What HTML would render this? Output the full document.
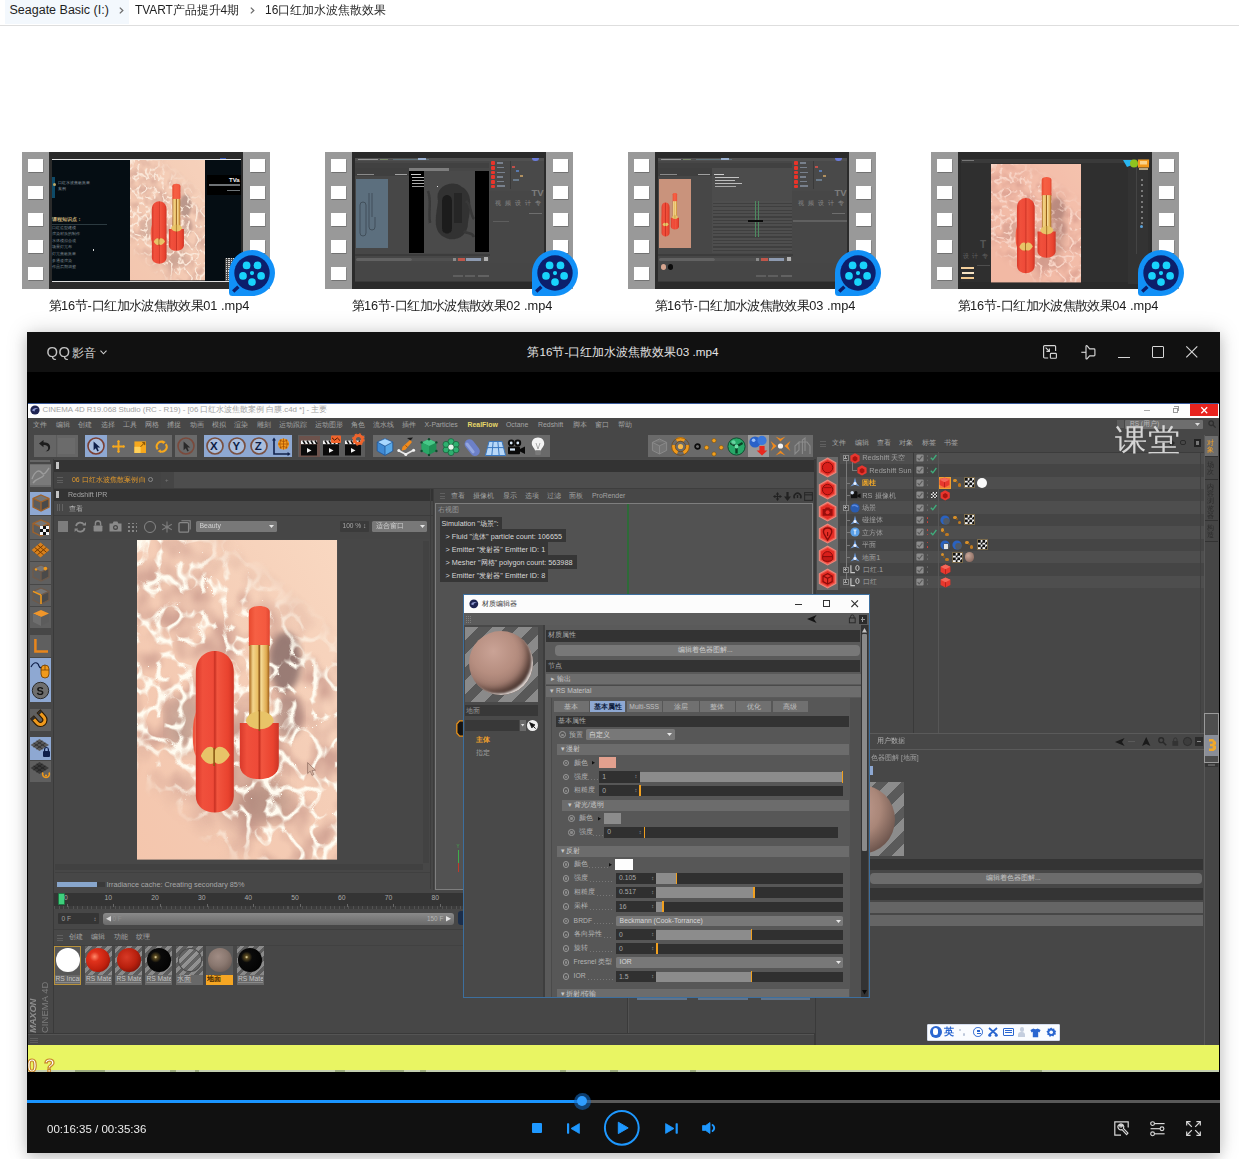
<!DOCTYPE html>
<html lang="zh">
<head>
<meta charset="utf-8">
<title>16口红加水波焦散效果</title>
<style>
*{box-sizing:border-box;margin:0;padding:0}
html,body{width:1239px;height:1159px;overflow:hidden;background:#fff}
body{position:relative;font-family:"Liberation Sans",sans-serif;color:#1b1b1b}
.a{position:absolute}
.t{white-space:nowrap}
svg{position:absolute;overflow:visible}
/* ---------- explorer ---------- */
#crumb{position:absolute;left:0;top:0;width:1239px;height:26px;border-bottom:1px solid #dedede;font-size:12.5px;line-height:20px;white-space:nowrap;color:#1f1f1f}
#crumb .hl{position:absolute;left:5px;top:0;width:124px;height:24px;background:#f3f8fd}
#crumb span{position:absolute;top:-0.5px}
.thumb{position:absolute;top:152px;width:248px;height:137px;background:#2b2b2b}
.thumb .strip{position:absolute;top:0;width:27px;height:137px;background:#999}
.thumb .strip.l{left:0}.thumb .strip.r{right:0}
.thumb .strip i{position:absolute;left:6px;width:15px;height:13px;background:#fff;box-shadow:0.5px 1px 0 #727272}
.thumb .strip.r i{left:7px}
.thumb .pic{position:absolute;left:27px;top:0;width:194px;height:137px;overflow:hidden;background:#2b2b2b}
.flabel{position:absolute;top:297.9px;width:300px;text-align:center;transform:scale(1.032,1.02);font-size:12.4px;line-height:17px;color:#1b1b1b;white-space:nowrap}
/* ---------- player ---------- */
#player{position:absolute;left:27px;top:332px;width:1193px;height:821px;background:#000;box-shadow:0 0 20px rgba(0,0,0,.17),0 5px 12px rgba(0,0,0,.15)}
#ptitle{position:absolute;left:0;top:0;width:1193px;height:40px;background:#111}
#pctrl{position:absolute;left:0;top:771px;width:1193px;height:50px;background:#111}
#video{position:absolute;left:1px;top:71px;width:1191px;height:669px;background:#484848;overflow:hidden}
#pg{position:absolute;left:-28px;top:-403px;width:1239px;height:1159px;font-size:7px;color:#aaa;filter:blur(0.55px)}
</style>
</head>
<body>
<svg width="0" height="0" style="position:absolute;left:0;top:0">
<defs>
<filter id="fcau" x="0" y="0" width="100%" height="100%" color-interpolation-filters="sRGB">
  <feTurbulence type="turbulence" baseFrequency="0.045 0.040" numOctaves="2" seed="23" result="n"/>
  <feColorMatrix in="n" type="matrix" values="0 0 0 0 1  0 0 0 0 0.985  0 0 0 0 0.94  -6.6 0 0 0 1.42"/>
  <feGaussianBlur stdDeviation="0.75"/>
</filter>
<filter id="fcel" x="0" y="0" width="100%" height="100%" color-interpolation-filters="sRGB">
  <feTurbulence type="fractalNoise" baseFrequency="0.040 0.034" numOctaves="2" seed="9" result="n"/>
  <feColorMatrix in="n" type="matrix" values="0 0 0 0 0.82  0 0 0 0 0.64  0 0 0 0 0.58  2.7 0 0 0 -1.08"/>
  <feGaussianBlur stdDeviation="1.2"/>
</filter>
<filter id="b3"><feGaussianBlur stdDeviation="3"/></filter>
<filter id="b6"><feGaussianBlur stdDeviation="7"/></filter>
<filter id="b1"><feGaussianBlur stdDeviation="0.6"/></filter>
<linearGradient id="gpe" x1="1" y1="0" x2="0" y2="1"><stop offset="0" stop-color="#f9d8c1"/><stop offset="0.5" stop-color="#f4ccb5"/><stop offset="1" stop-color="#f4c6ad"/></linearGradient>
<linearGradient id="gm1" gradientUnits="userSpaceOnUse" x1="215" y1="30" x2="-15" y2="290"><stop offset="0" stop-color="#fff" stop-opacity="0"/><stop offset="0.15" stop-color="#fff" stop-opacity="0"/><stop offset="0.30" stop-color="#fff" stop-opacity="1"/><stop offset="0.74" stop-color="#fff" stop-opacity="1"/><stop offset="0.88" stop-color="#fff" stop-opacity="0"/><stop offset="1" stop-color="#fff" stop-opacity="0"/></linearGradient>
<mask id="mk" maskUnits="userSpaceOnUse" x="0" y="0" width="200" height="320"><rect width="200" height="320" fill="#000"/><rect width="200" height="320" fill="url(#gm1)"/></mask>
<linearGradient id="gred" x1="0" x2="1"><stop offset="0" stop-color="#d8392a"/><stop offset="0.18" stop-color="#f0503c"/><stop offset="0.46" stop-color="#ee4a38"/><stop offset="0.5" stop-color="#c83022"/><stop offset="0.56" stop-color="#f2553f"/><stop offset="0.85" stop-color="#e9432f"/><stop offset="1" stop-color="#cc3425"/></linearGradient>
<linearGradient id="gstick" x1="0" x2="1"><stop offset="0" stop-color="#e8492f"/><stop offset="0.3" stop-color="#f66044"/><stop offset="0.8" stop-color="#f4593f"/><stop offset="1" stop-color="#e04630"/></linearGradient>
<linearGradient id="ggold" x1="0" x2="1"><stop offset="0" stop-color="#a8661c"/><stop offset="0.18" stop-color="#f3d58c"/><stop offset="0.42" stop-color="#e9bd62"/><stop offset="0.5" stop-color="#8a5414"/><stop offset="0.58" stop-color="#f6dc98"/><stop offset="0.85" stop-color="#e0ac52"/><stop offset="1" stop-color="#9c5c18"/></linearGradient>
<symbol id="water" viewBox="0 0 200 320" preserveAspectRatio="none">
  <rect width="200" height="320" fill="url(#gpe)"/>
  <g mask="url(#mk)"><rect width="200" height="320" filter="url(#fcel)"/></g>
  <ellipse cx="108" cy="232" rx="38" ry="62" fill="#c09488" opacity=".5" filter="url(#b6)"/>
  <ellipse cx="148" cy="122" rx="16" ry="30" fill="#8a6e6a" opacity=".85" filter="url(#b3)"/>
  <ellipse cx="152" cy="176" rx="14" ry="22" fill="#9c7c76" opacity=".6" filter="url(#b3)"/>
  <ellipse cx="128" cy="262" rx="26" ry="20" fill="#a88478" opacity=".6" filter="url(#b6)"/>
  <ellipse cx="46" cy="186" rx="16" ry="28" fill="#a88e84" opacity=".55" filter="url(#b6)"/>
  <g mask="url(#mk)"><rect width="200" height="320" filter="url(#fcau)"/></g>
</symbol>
<symbol id="lip" viewBox="0 0 100 220">
  <!-- shadow hints -->
  <!-- cap -->
  <path d="M6 72 C6 44 44 44 44 72 V196 C44 218 6 218 6 196 Z" fill="url(#gred)"/>
  <path d="M4 120 C2 135 3 150 6 156 V112 Z" fill="#f0573f"/>
  <path d="M11 156 C15 146 23 144 25 151 C27 144 36 146 40 155 C35 164 28 166 25 162 C22 166 15 164 11 156 Z" fill="#e8c468"/>
  <path d="M24.3 148 V166" stroke="#8c5a14" stroke-width="1.6"/>
  <!-- stick -->
  <path d="M59 12 C59 4 80 4 80 12 V46 H59 Z" fill="url(#gstick)"/>
  <rect x="59.5" y="45" width="20" height="78" fill="url(#ggold)"/>
  <!-- base -->
  <path d="M50 123 H89 V165 C89 184 50 184 50 165 Z" fill="url(#gred)"/>
  <path d="M56 121 C58 108 82 108 84 121 C80 132 60 132 56 121 Z" fill="#e8c468"/>
  <path d="M69.6 110 V131" stroke="#8c5a14" stroke-width="1.5"/>
</symbol>
<symbol id="qq" viewBox="0 0 48 48">
  <path d="M24 1 A23 23 0 1 1 24 47 H4.5 A3.5 3.5 0 0 1 1 43.500 V24 A23 23 0 0 1 24 1 Z" fill="#1190f7"/>
  <circle cx="24" cy="24" r="17.7" fill="#0c1f6c"/>
  <path d="M5.2 42.6 L10.4 37.8" stroke="#0c1f6c" stroke-width="3.4"/>
  <g fill="#18d4fc"><circle cx="18.6" cy="16.4" r="3.85"/><circle cx="29.5" cy="16.4" r="3.85"/><circle cx="15" cy="26.9" r="3.85"/><circle cx="33.1" cy="26.9" r="3.85"/><circle cx="24" cy="33.1" r="3.85"/><circle cx="24" cy="24.1" r="2.1"/></g>
</symbol>
</defs>
</svg>
<!-- ======= Explorer breadcrumb ======= -->
<div id="crumb"><div class="hl"></div><span style="left:9.5px">Seagate Basic (I:)</span><svg style="left:119px;top:7px" width="5" height="7" viewBox="0 0 5 7"><path d="M0.8 0.6 L3.8 3.5 L0.8 6.4" fill="none" stroke="#6e6e6e" stroke-width="1.3"/></svg><span style="left:135px;font-size:12px;transform:scaleX(.991);transform-origin:0 0">TVART产品提升4期</span><svg style="left:250px;top:7px" width="5" height="7" viewBox="0 0 5 7"><path d="M0.8 0.6 L3.8 3.5 L0.8 6.4" fill="none" stroke="#6e6e6e" stroke-width="1.3"/></svg><span style="left:264.8px;font-size:12px;transform:scaleX(.998);transform-origin:0 0">16口红加水波焦散效果</span></div>
<!-- ======= Thumbnails ======= -->
<div class="thumb" id="t1" style="left:22px"><div class="strip l"><i style="top:7px"></i><i style="top:34px"></i><i style="top:61px"></i><i style="top:88px"></i><i style="top:115px"></i></div><div class="pic"><div class="a" style="left:2.5px;top:6.5px;width:189px;height:1.2px;background:#e8e8e8;"></div><div class="a" style="left:2.5px;top:8px;width:189px;height:120.5px;background:#050d13;"></div><div class="a" style="left:2.5px;top:128.5px;width:189px;height:1.6px;background:#e0e0e0;"></div><svg style="left:81px;top:8px" width="75" height="120.5"><use href="#water" width="75" height="120.5"/><rect width="75" height="120.5" fill="#f3c8b2" opacity=".38"/><use href="#lip" x="19.5" y="21.5" width="38.7" height="85.1"/></svg><div class="a" style="left:3px;top:25px;width:3px;height:21px;background:#0e4a68;"></div><div class="a" style="left:3.5px;top:30.5px;width:3px;height:3px;background:#b9a86a;border-radius:50%"></div><span class="a t" style="left:9px;top:28.7px;font-size:3.6px;line-height:5.6px;color:#8e98a0;">口红水波焦散效果</span><span class="a t" style="left:9px;top:34.7px;font-size:3.6px;line-height:5.6px;color:#8e98a0;">案例</span><span class="a t" style="left:2.5px;top:64.7px;font-size:4.6px;line-height:6.6px;color:#c9b27a;font-weight:bold">课程知识点：</span><div class="a" style="left:3px;top:72px;width:55px;height:0.5px;background:#2c3a40;"></div><span class="a t" style="left:3px;top:73.75px;font-size:3.5px;line-height:5.5px;color:#7f8a92;">口红造型建模</span><span class="a t" style="left:3px;top:80.3px;font-size:3.5px;line-height:5.5px;color:#7f8a92;">渲染材质的制作</span><span class="a t" style="left:3px;top:86.85px;font-size:3.5px;line-height:5.5px;color:#7f8a92;">水体模拟合成</span><span class="a t" style="left:3px;top:93.4px;font-size:3.5px;line-height:5.5px;color:#7f8a92;">场景灯光布</span><span class="a t" style="left:3px;top:99.95px;font-size:3.5px;line-height:5.5px;color:#7f8a92;">灯光焦散效果</span><span class="a t" style="left:3px;top:106.5px;font-size:3.5px;line-height:5.5px;color:#7f8a92;">多通道渲染</span><span class="a t" style="left:3px;top:113.05px;font-size:3.5px;line-height:5.5px;color:#7f8a92;">作品后期调整</span><div class="a" style="left:43.5px;top:96.5px;width:1.2px;height:2px;background:#d8d8d8;"></div><div class="a" style="left:158px;top:23px;width:34px;height:20px;background:#000;"></div><span class="a t" style="left:180px;top:23.5px;font-size:6px;line-height:8px;color:#f2f2f2;font-weight:bold">TVa</span><div class="a" style="left:160px;top:32.2px;width:31px;height:2.2px;background:#8a8f92;opacity:.8"></div><div class="a" style="left:178px;top:38px;width:13px;height:1px;background:#70767a;"></div><div class="a" style="left:176px;top:105.5px;width:14px;height:23px;background:#d9d9d9;background-image:repeating-linear-gradient(90deg,#444 0 1px,transparent 1px 2.3px),repeating-linear-gradient(0deg,#555 0 1px,transparent 1px 2.1px)"></div><div class="a" style="left:171px;top:6px;width:6px;height:1.4px;background:#3a62d8;opacity:.8"></div></div><div class="strip r"><i style="top:7px"></i><i style="top:34px"></i><i style="top:61px"></i><i style="top:88px"></i><i style="top:115px"></i></div></div>
<div class="thumb" id="t2" style="left:325px"><div class="strip l"><i style="top:7px"></i><i style="top:34px"></i><i style="top:61px"></i><i style="top:88px"></i><i style="top:115px"></i></div><div class="pic"><div class="a" style="left:2.5px;top:6px;width:189px;height:2.6px;background:#505050;"></div><div class="a" style="left:6px;top:6.5px;width:20px;height:1.3px;background:#9a9a9a;"></div><div class="a" style="left:41px;top:6.5px;width:36px;height:1.2px;background:#5f7078;"></div><div class="a" style="left:66px;top:6.2px;width:8px;height:1.6px;background:#9ab0d0;"></div><div class="a" style="left:28px;top:6.6px;width:8px;height:1px;background:#7a8a6a;"></div><div class="a" style="left:2.5px;top:8.6px;width:189px;height:120.4px;background:#474747;"></div><div class="a" style="left:2.5px;top:10.5px;width:189px;height:5px;background:#414141;"></div><div class="a" style="left:2.5px;top:15.5px;width:54px;height:8px;background:#3f3f3f;"></div><div class="a" style="left:5px;top:21.8px;width:17px;height:1.5px;background:#8a8a8a;"></div><div class="a" style="left:43px;top:21.6px;width:12px;height:1.8px;background:#a0a0a0;"></div><div class="a" style="left:137px;top:8.6px;width:54.5px;height:30px;background:#494949;"></div><div class="a" style="left:139.2px;top:9.4px;width:4px;height:3.6px;background:#e8342a;border-radius:1px"></div><div class="a" style="left:145px;top:10.2px;width:6px;height:1.5px;background:#78808c;"></div><div class="a" style="left:139.2px;top:14.05px;width:4px;height:3.6px;background:#e8342a;border-radius:1px"></div><div class="a" style="left:145px;top:14.85px;width:7px;height:1.5px;background:#78808c;"></div><div class="a" style="left:139.2px;top:18.700000000000003px;width:4px;height:3.6px;background:#e8342a;border-radius:1px"></div><div class="a" style="left:145px;top:19.5px;width:8px;height:1.5px;background:#78808c;"></div><div class="a" style="left:139.2px;top:23.35px;width:4px;height:3.6px;background:#e8342a;border-radius:1px"></div><div class="a" style="left:145px;top:24.15px;width:6px;height:1.5px;background:#78808c;"></div><div class="a" style="left:139.2px;top:28.0px;width:4px;height:3.6px;background:#e8342a;border-radius:1px"></div><div class="a" style="left:145px;top:28.8px;width:7px;height:1.5px;background:#78808c;"></div><div class="a" style="left:139.2px;top:32.65px;width:4px;height:3.6px;background:#e8342a;border-radius:1px"></div><div class="a" style="left:145px;top:33.45px;width:8px;height:1.5px;background:#78808c;"></div><div class="a" style="left:158px;top:9px;width:0.5px;height:28px;background:#3a3a3a;"></div><div class="a" style="left:160px;top:14px;width:3px;height:2px;background:#c0504a;"></div><div class="a" style="left:164px;top:18px;width:3px;height:2px;background:#5a7ab0;"></div><div class="a" style="left:168px;top:22.5px;width:3px;height:2.2px;background:#b09060;"></div><div class="a" style="left:161px;top:27px;width:6px;height:1.6px;background:#6a7a8a;"></div><div class="a" style="left:180px;top:6.4px;width:7px;height:2.4px;background:#6a7ad8;border-radius:0 0 3px 3px"></div><div class="a" style="left:2.5px;top:101.5px;width:135px;height:2.6px;background:#3c3c3c;"></div><div class="a" style="left:3.5px;top:106px;width:56px;height:3.2px;background:#626262;border-radius:1.6px"></div><div class="a" style="left:60px;top:105.8px;width:77px;height:3.4px;background:#505050;"></div><div class="a" style="left:101px;top:105.6px;width:3px;height:3.4px;background:#8a8a8a;"></div><div class="a" style="left:106px;top:106px;width:7px;height:2.8px;background:#c0564a;"></div><div class="a" style="left:114px;top:105.8px;width:15px;height:3px;background:#8d9ab0;"></div><div class="a" style="left:132px;top:105.4px;width:4px;height:3.8px;background:#b0b0b0;"></div><div class="a" style="left:2.5px;top:110.5px;width:189px;height:18.5px;background:#464646;"></div><div class="a" style="left:101px;top:123px;width:10px;height:1.5px;background:#5e5e5e;"></div><div class="a" style="left:113px;top:123px;width:10px;height:1.5px;background:#5e5e5e;"></div><div class="a" style="left:126px;top:123px;width:11px;height:1.6px;background:#626262;"></div><div class="a" style="left:2.5px;top:129px;width:189px;height:1.2px;background:#3a3a3a;"></div><span class="a t" style="left:179.5px;top:34.75px;font-size:9.5px;line-height:11.5px;color:#7d7d7d;font-weight:bold">TV</span><span class="a t" style="left:142.6px;top:48.4px;font-size:5.6px;line-height:7.6px;color:#888;letter-spacing:1.3px">视 频 设 计 专</span><div class="a" style="left:177px;top:61px;width:13px;height:1.4px;background:#6e6e6e;"></div><div class="a" style="left:141px;top:69px;width:16px;height:1.3px;background:#5e5e5e;"></div><div class="a" style="left:3.5px;top:26.5px;width:32px;height:69.5px;background:#5c6f7e;"></div><svg style="left:3.5px;top:26.5px" width="32" height="70" viewBox="0 0 32 70" fill="none" stroke="#414f5a" stroke-width="1"><rect x="4" y="23" width="6" height="34" rx="3"/><path d="M13 14 V48 Q13 51 16 51 Q19 51 19 48 V38 M16 14 V38" /></svg><div class="a" style="left:57px;top:19px;width:14.5px;height:82px;background:#000;"></div><div class="a" style="left:57px;top:16px;width:40px;height:3px;background:#7d7d7d;"></div><div class="a" style="left:59px;top:21.5px;width:10px;height:1.2px;background:#cfcfcf;"></div><div class="a" style="left:60px;top:24.5px;width:22px;height:1.2px;background:#bdbdbd;"></div><div class="a" style="left:60px;top:27.5px;width:19px;height:1.2px;background:#b0b0b0;"></div><div class="a" style="left:60px;top:30.5px;width:24px;height:1.2px;background:#b0b0b0;"></div><div class="a" style="left:60px;top:33.5px;width:18px;height:1.2px;background:#9a9a9a;"></div><div class="a" style="left:71.5px;top:19px;width:51.5px;height:82px;background:#4a4a4a;"></div><svg style="left:71.5px;top:19px" width="52" height="82" viewBox="0 0 52 82"><g filter="url(#b1)"><path d="M14 30 C10 14 30 8 38 16 C50 22 46 40 44 52 C44 66 30 72 20 66 C8 60 12 44 14 30 Z" fill="#333"/><path d="M18 30 C18 22 28 22 28 30 V58 C28 64 18 64 18 58 Z" fill="#1f1f1f"/><path d="M30 22 H38 V52 H30 Z" fill="#262626"/><path d="M4 20 C8 30 4 40 6 52 M40 60 C44 64 48 60 50 66 M42 30 C48 34 46 44 50 48" stroke="#383838" stroke-width="2.5" fill="none"/></g></svg><div class="a" style="left:123px;top:19px;width:14px;height:81px;background:#000;"></div><div class="a" style="left:84.5px;top:33.5px;width:1.4px;height:1.8px;background:#ddd;"></div></div><div class="strip r"><i style="top:7px"></i><i style="top:34px"></i><i style="top:61px"></i><i style="top:88px"></i><i style="top:115px"></i></div></div>
<div class="thumb" id="t3" style="left:628px"><div class="strip l"><i style="top:7px"></i><i style="top:34px"></i><i style="top:61px"></i><i style="top:88px"></i><i style="top:115px"></i></div><div class="pic"><div class="a" style="left:2.5px;top:6px;width:189px;height:2.6px;background:#505050;"></div><div class="a" style="left:6px;top:6.5px;width:20px;height:1.3px;background:#9a9a9a;"></div><div class="a" style="left:41px;top:6.5px;width:36px;height:1.2px;background:#5f7078;"></div><div class="a" style="left:66px;top:6.2px;width:8px;height:1.6px;background:#9ab0d0;"></div><div class="a" style="left:28px;top:6.6px;width:8px;height:1px;background:#7a8a6a;"></div><div class="a" style="left:2.5px;top:8.6px;width:189px;height:120.4px;background:#474747;"></div><div class="a" style="left:2.5px;top:10.5px;width:189px;height:5px;background:#414141;"></div><div class="a" style="left:2.5px;top:15.5px;width:54px;height:8px;background:#3f3f3f;"></div><div class="a" style="left:5px;top:21.8px;width:17px;height:1.5px;background:#8a8a8a;"></div><div class="a" style="left:43px;top:21.6px;width:12px;height:1.8px;background:#a0a0a0;"></div><div class="a" style="left:137px;top:8.6px;width:54.5px;height:30px;background:#494949;"></div><div class="a" style="left:139.2px;top:9.4px;width:4px;height:3.6px;background:#e8342a;border-radius:1px"></div><div class="a" style="left:145px;top:10.2px;width:6px;height:1.5px;background:#78808c;"></div><div class="a" style="left:139.2px;top:14.05px;width:4px;height:3.6px;background:#e8342a;border-radius:1px"></div><div class="a" style="left:145px;top:14.85px;width:7px;height:1.5px;background:#78808c;"></div><div class="a" style="left:139.2px;top:18.700000000000003px;width:4px;height:3.6px;background:#e8342a;border-radius:1px"></div><div class="a" style="left:145px;top:19.5px;width:8px;height:1.5px;background:#78808c;"></div><div class="a" style="left:139.2px;top:23.35px;width:4px;height:3.6px;background:#e8342a;border-radius:1px"></div><div class="a" style="left:145px;top:24.15px;width:6px;height:1.5px;background:#78808c;"></div><div class="a" style="left:139.2px;top:28.0px;width:4px;height:3.6px;background:#e8342a;border-radius:1px"></div><div class="a" style="left:145px;top:28.8px;width:7px;height:1.5px;background:#78808c;"></div><div class="a" style="left:139.2px;top:32.65px;width:4px;height:3.6px;background:#e8342a;border-radius:1px"></div><div class="a" style="left:145px;top:33.45px;width:8px;height:1.5px;background:#78808c;"></div><div class="a" style="left:158px;top:9px;width:0.5px;height:28px;background:#3a3a3a;"></div><div class="a" style="left:160px;top:14px;width:3px;height:2px;background:#c0504a;"></div><div class="a" style="left:164px;top:18px;width:3px;height:2px;background:#5a7ab0;"></div><div class="a" style="left:168px;top:22.5px;width:3px;height:2.2px;background:#b09060;"></div><div class="a" style="left:161px;top:27px;width:6px;height:1.6px;background:#6a7a8a;"></div><div class="a" style="left:180px;top:6.4px;width:7px;height:2.4px;background:#6a7ad8;border-radius:0 0 3px 3px"></div><div class="a" style="left:2.5px;top:101.5px;width:135px;height:2.6px;background:#3c3c3c;"></div><div class="a" style="left:3.5px;top:106px;width:56px;height:3.2px;background:#626262;border-radius:1.6px"></div><div class="a" style="left:60px;top:105.8px;width:77px;height:3.4px;background:#505050;"></div><div class="a" style="left:101px;top:105.6px;width:3px;height:3.4px;background:#8a8a8a;"></div><div class="a" style="left:106px;top:106px;width:7px;height:2.8px;background:#c0564a;"></div><div class="a" style="left:114px;top:105.8px;width:15px;height:3px;background:#8d9ab0;"></div><div class="a" style="left:132px;top:105.4px;width:4px;height:3.8px;background:#b0b0b0;"></div><div class="a" style="left:2.5px;top:110.5px;width:189px;height:18.5px;background:#464646;"></div><div class="a" style="left:101px;top:123px;width:10px;height:1.5px;background:#5e5e5e;"></div><div class="a" style="left:113px;top:123px;width:10px;height:1.5px;background:#5e5e5e;"></div><div class="a" style="left:126px;top:123px;width:11px;height:1.6px;background:#626262;"></div><div class="a" style="left:2.5px;top:129px;width:189px;height:1.2px;background:#3a3a3a;"></div><span class="a t" style="left:179.5px;top:34.75px;font-size:9.5px;line-height:11.5px;color:#7d7d7d;font-weight:bold">TV</span><span class="a t" style="left:142.6px;top:48.4px;font-size:5.6px;line-height:7.6px;color:#888;letter-spacing:1.3px">视 频 设 计 专</span><div class="a" style="left:177px;top:61px;width:13px;height:1.4px;background:#6e6e6e;"></div><div class="a" style="left:141px;top:69px;width:16px;height:1.3px;background:#5e5e5e;"></div><div class="a" style="left:3.5px;top:26.5px;width:32.5px;height:69px;background:#c9937c;"></div><svg style="left:3.5px;top:26.5px" width="33" height="69"><use href="#lip" x="1.3" y="12.8" width="21" height="46.2"/></svg><div class="a" style="left:57px;top:16px;width:80px;height:85px;background:#4c4c4c;"></div><div class="a" style="left:59px;top:21.5px;width:10px;height:1.2px;background:#cfcfcf;"></div><div class="a" style="left:60px;top:24.5px;width:24px;height:1.3px;background:#c4c4c4;"></div><div class="a" style="left:60px;top:27.5px;width:20px;height:1.3px;background:#bcbcbc;"></div><div class="a" style="left:60px;top:30.5px;width:27px;height:1.3px;background:#bcbcbc;"></div><div class="a" style="left:60px;top:33.5px;width:21px;height:1.3px;background:#a8a8a8;"></div><div class="a" style="left:57.5px;top:49px;width:79px;height:50px;background:repeating-linear-gradient(0deg,#3f3f3f 0 1.2px,#4e4e4e 1.2px 3.35px)"></div><div class="a" style="left:100px;top:49px;width:0.8px;height:36px;background:#4d8a60;"></div><div class="a" style="left:103px;top:49px;width:0.8px;height:36px;background:#4d8a60;"></div><div class="a" style="left:92.5px;top:68px;width:15px;height:1.8px;background:#0a0a0a;"></div><div class="a" style="left:5.5px;top:112px;width:5px;height:5.5px;background:#d7a58f;border-radius:50%"></div><div class="a" style="left:12.5px;top:112px;width:5px;height:5.5px;background:#0c0c0c;border-radius:50%"></div><div class="a" style="left:138px;top:68.2px;width:53.5px;height:2px;background:#606060;"></div></div><div class="strip r"><i style="top:7px"></i><i style="top:34px"></i><i style="top:61px"></i><i style="top:88px"></i><i style="top:115px"></i></div></div>
<div class="thumb" id="t4" style="left:931px"><div class="strip l"><i style="top:7px"></i><i style="top:34px"></i><i style="top:61px"></i><i style="top:88px"></i><i style="top:115px"></i></div><div class="pic"><div class="a" style="left:2.5px;top:6.5px;width:189px;height:123px;background:#2f2f2f;"></div><div class="a" style="left:2.5px;top:6.5px;width:189px;height:4.5px;background:#3a3a3a;"></div><div class="a" style="left:4px;top:7.5px;width:12px;height:1.2px;background:#777;"></div><svg style="left:33px;top:11.5px" width="90" height="118.5"><use href="#water" width="90" height="118.5"/><rect width="90" height="118.5" fill="#f0aa98" opacity=".48"/><ellipse cx="66" cy="62" rx="9" ry="30" fill="#b08478" opacity=".45" filter="url(#b3)"/><use href="#lip" x="23.2" y="10.2" width="46.6" height="102.5"/></svg><span class="a t" style="left:22px;top:87.0px;font-size:10px;line-height:12px;color:#565656;font-weight:bold">T</span><span class="a t" style="left:4.5px;top:100.7px;font-size:5.6px;line-height:7.6px;color:#606060;letter-spacing:1px">设 计 专</span><div class="a" style="left:19px;top:113px;width:13px;height:1.2px;background:#4e4e4e;"></div><div class="a" style="left:3px;top:114.6px;width:12.5px;height:2.4px;background:#f3cf9c;"></div><div class="a" style="left:4px;top:119.6px;width:11.5px;height:2.6px;background:#f6e3c4;"></div><div class="a" style="left:3px;top:125px;width:12.5px;height:2.4px;background:#f1c88e;"></div><div class="a" style="left:170px;top:8px;width:20px;height:124px;background:#333;"></div><div class="a" style="left:178px;top:12px;width:1px;height:90px;background:#444;"></div><div class="a" style="left:182.5px;top:27.0px;width:2.4px;height:2px;background:#7a7a7a;"></div><div class="a" style="left:182.5px;top:32.4px;width:2.4px;height:2px;background:#7a7a7a;"></div><div class="a" style="left:182.5px;top:37.8px;width:2.4px;height:2px;background:#7a7a7a;"></div><div class="a" style="left:182.5px;top:43.2px;width:2.4px;height:2px;background:#7a7a7a;"></div><div class="a" style="left:182.5px;top:48.6px;width:2.4px;height:2px;background:#7a7a7a;"></div><div class="a" style="left:182.5px;top:54.0px;width:2.4px;height:2px;background:#7a7a7a;"></div><div class="a" style="left:182.5px;top:59.400000000000006px;width:2.4px;height:2px;background:#7a7a7a;"></div><div class="a" style="left:182.5px;top:64.80000000000001px;width:2.4px;height:2px;background:#7a7a7a;"></div><div class="a" style="left:182.5px;top:70.2px;width:2.4px;height:2px;background:#7a7a7a;"></div><div class="a" style="left:182px;top:73px;width:3px;height:3px;background:#5aa0d8;border-radius:50%"></div><svg style="left:165px;top:6.5px" width="27" height="12" viewBox="0 0 27 12"><path d="M0 1 H9 V6 L4 8 Z" fill="#29b6f0"/><circle cx="11" cy="4.5" r="4" fill="#8fc31f"/><rect x="15" y="0.5" width="11" height="8" fill="#f39a1e"/><rect x="17" y="2" width="7" height="3.5" fill="#fbd28a"/><rect x="16" y="9.3" width="9" height="1.4" fill="#f3d9a8"/></svg></div><div class="strip r"><i style="top:7px"></i><i style="top:34px"></i><i style="top:61px"></i><i style="top:88px"></i><i style="top:115px"></i></div></div>
<div class="flabel" style="left:-1px">第16节-口红加水波焦散效果01 .mp4</div>
<div class="flabel" style="left:302px">第16节-口红加水波焦散效果02 .mp4</div>
<div class="flabel" style="left:605px">第16节-口红加水波焦散效果03 .mp4</div>
<div class="flabel" style="left:908px">第16节-口红加水波焦散效果04 .mp4</div>
<svg style="left:228px;top:249px" width="48" height="48"><use href="#qq" width="48" height="48"/></svg>
<svg style="left:531px;top:249px" width="48" height="48"><use href="#qq" width="48" height="48"/></svg>
<svg style="left:834px;top:249px" width="48" height="48"><use href="#qq" width="48" height="48"/></svg>
<svg style="left:1137px;top:249px" width="48" height="48"><use href="#qq" width="48" height="48"/></svg>
<!-- ======= QQ Player window ======= -->
<div id="player">
<div id="ptitle"><span class="a t" style="left:19.5px;top:10px;font-size:14.8px;line-height:20px;color:#d2d2d2;letter-spacing:0.6px;font-weight:400;opacity:.92">QQ</span><span class="a t" style="left:44.5px;top:10.5px;font-size:12px;line-height:20px;color:#d2d2d2;letter-spacing:0px">影音</span><svg style="left:73px;top:17.5px" width="7" height="5" viewBox="0 0 7 5"><path d="M0.5 0.7 L3.5 3.8 L6.5 0.7" fill="none" stroke="#cfcfcf" stroke-width="1.1"/></svg><span class="a t" style="left:396px;top:10px;width:400px;text-align:center;font-size:11.7px;line-height:20px;color:#e4e4e4">第16节-口红加水波焦散效果03 .mp4</span><svg style="left:1016px;top:13px" width="14" height="14" viewBox="0 0 14 14" fill="none" stroke="#d6d6d6" stroke-width="1.15"><path d="M5.2 13 H1.6 a1 1 0 0 1 -1 -1 V1.6 a1 1 0 0 1 1 -1 H11.6 a1 1 0 0 1 1 1 V6"/><rect x="7.4" y="8.4" width="6" height="4.8" rx="0.8"/><path d="M2.6 2.6 L6.2 6.2 M6.4 3.4 V6.4 H3.4"/></svg><svg style="left:1054px;top:12.5px" width="15" height="15" viewBox="0 0 15 15" fill="none" stroke="#d6d6d6" stroke-width="1.15" stroke-linejoin="round"><path d="M0.3 7.3 H5"/><path d="M5 1.2 C5 0.6 5.8 0.4 6.2 0.9 L8.6 3.8 H13 a0.9 0.9 0 0 1 0.9 0.9 V9.9 a0.9 0.9 0 0 1 -0.9 0.9 H8.6 L6.2 13.7 C5.8 14.2 5 14 5 13.4 Z"/></svg><div class="a" style="left:91px;top:0"></div><div class="a" style="left:1091px;top:24.9px;width:12px;height:1.2px;background:#d6d6d6;"></div><div class="a" style="left:1125.2px;top:14.3px;width:11.6px;height:11.6px;border:1.2px solid #d6d6d6;border-radius:1px"></div><svg style="left:1159px;top:14.3px" width="11.6" height="11.6" viewBox="0 0 11.6 11.6"><path d="M0.3 0.3 L11.3 11.3 M11.3 0.3 L0.3 11.3" stroke="#d6d6d6" stroke-width="1.15" fill="none"/></svg></div>
<div id="video"><div id="pg">
<!-- c4d title / menu / toolbar -->
<div class="a" style="left:28px;top:403px;width:1191px;height:14.6px;background:#fdfdfd;"></div><div class="a" style="left:28px;top:403px;width:1191px;height:0.8px;background:#3a5a9a;"></div><svg style="left:30px;top:405px" width="10" height="10" viewBox="0 0 10 10"><circle cx="5" cy="5" r="4.6" fill="#1e2452"/><path d="M2 5.6 C3 3 6 2.4 8.4 3.6 C6 3.6 4.6 4.8 4.6 6.6 Z" fill="#8f9ad0"/></svg><span class="a t" style="left:42.5px;top:405.45px;font-size:7.9px;line-height:9.9px;color:#a2a2a2;letter-spacing:-0.04px">CINEMA 4D R19.068 Studio (RC - R19) - [06 口红水波焦散案例 白膜.c4d *] - 主要</span><div class="a" style="left:1144px;top:410px;width:6px;height:0.9px;background:#aaa;"></div><div class="a" style="left:1172.5px;top:407.5px;width:5px;height:5px;border:0.8px solid #999"></div><div class="a" style="left:1174px;top:406px;width:5px;height:5px;border-top:0.8px solid #999;border-right:0.8px solid #999"></div><div class="a" style="left:1189.5px;top:403.6px;width:28.5px;height:12px;background:#e8231e;"></div><svg style="left:1200.5px;top:406.5px" width="6.5" height="6.5" viewBox="0 0 6.5 6.5"><path d="M0.3 0.3 L6.2 6.2 M6.2 0.3 L0.3 6.2" stroke="#fff" stroke-width="1.3"/></svg><div class="a" style="left:28px;top:417.6px;width:1191px;height:15px;background:#474747;"></div><span class="a t" style="left:33px;top:420.55px;font-size:6.9px;line-height:8.9px;color:#a4a4a4;">文件</span><span class="a t" style="left:56px;top:420.55px;font-size:6.9px;line-height:8.9px;color:#a4a4a4;">编辑</span><span class="a t" style="left:78px;top:420.55px;font-size:6.9px;line-height:8.9px;color:#a4a4a4;">创建</span><span class="a t" style="left:100.5px;top:420.55px;font-size:6.9px;line-height:8.9px;color:#a4a4a4;">选择</span><span class="a t" style="left:122.5px;top:420.55px;font-size:6.9px;line-height:8.9px;color:#a4a4a4;">工具</span><span class="a t" style="left:145px;top:420.55px;font-size:6.9px;line-height:8.9px;color:#a4a4a4;">网格</span><span class="a t" style="left:167px;top:420.55px;font-size:6.9px;line-height:8.9px;color:#a4a4a4;">捕捉</span><span class="a t" style="left:189.5px;top:420.55px;font-size:6.9px;line-height:8.9px;color:#a4a4a4;">动画</span><span class="a t" style="left:211.5px;top:420.55px;font-size:6.9px;line-height:8.9px;color:#a4a4a4;">模拟</span><span class="a t" style="left:234px;top:420.55px;font-size:6.9px;line-height:8.9px;color:#a4a4a4;">渲染</span><span class="a t" style="left:256.5px;top:420.55px;font-size:6.9px;line-height:8.9px;color:#a4a4a4;">雕刻</span><span class="a t" style="left:278.5px;top:420.55px;font-size:6.9px;line-height:8.9px;color:#a4a4a4;">运动跟踪</span><span class="a t" style="left:314.5px;top:420.55px;font-size:6.9px;line-height:8.9px;color:#a4a4a4;">运动图形</span><span class="a t" style="left:351px;top:420.55px;font-size:6.9px;line-height:8.9px;color:#a4a4a4;">角色</span><span class="a t" style="left:373px;top:420.55px;font-size:6.9px;line-height:8.9px;color:#a4a4a4;">流水线</span><span class="a t" style="left:402px;top:420.55px;font-size:6.9px;line-height:8.9px;color:#a4a4a4;">插件</span><span class="a t" style="left:424.5px;top:420.55px;font-size:6.9px;line-height:8.9px;color:#a4a4a4;">X-Particles</span><span class="a t" style="left:467.5px;top:420.55px;font-size:6.9px;line-height:8.9px;color:#e8d86a;font-weight:bold;">RealFlow</span><span class="a t" style="left:506px;top:420.55px;font-size:6.9px;line-height:8.9px;color:#a4a4a4;">Octane</span><span class="a t" style="left:538px;top:420.55px;font-size:6.9px;line-height:8.9px;color:#a4a4a4;">Redshift</span><span class="a t" style="left:573px;top:420.55px;font-size:6.9px;line-height:8.9px;color:#a4a4a4;">脚本</span><span class="a t" style="left:595px;top:420.55px;font-size:6.9px;line-height:8.9px;color:#a4a4a4;">窗口</span><span class="a t" style="left:617.5px;top:420.55px;font-size:6.9px;line-height:8.9px;color:#a4a4a4;">帮助</span><div class="a" style="left:1117px;top:419.5px;width:7px;height:8px;background:#5c5c5c;"></div><div class="a" style="left:1125px;top:419.8px;width:78px;height:9.4px;background:#6e6e6e;border-radius:1px"></div><span class="a t" style="left:1130px;top:420.25px;font-size:6.5px;line-height:8.5px;color:#b8b8b8;">RS (用户)</span><svg style="left:1195px;top:423px" width="5" height="3" viewBox="0 0 5 3"><path d="M0 0 H5 L2.5 3 Z" fill="#ddd"/></svg><svg style="left:1208px;top:420px" width="8" height="8" viewBox="0 0 8 8" fill="none" stroke="#2e2e2e" stroke-width="1.3"><circle cx="3.2" cy="3.2" r="2.3"/><path d="M5 5 L7.6 7.6"/></svg><div class="a" style="left:28px;top:432.6px;width:1191px;height:26px;background:#474747;"></div><div class="a" style="left:34px;top:435px;width:43.5px;height:21.5px;background:#656565;"></div><div class="a" style="left:55.5px;top:435px;width:0.6px;height:21.5px;background:#5a5a5a;"></div><div class="a" style="left:85px;top:435px;width:21.5px;height:21.5px;background:#8ea8d2;"></div><div class="a" style="left:106.5px;top:435px;width:65.5px;height:21.5px;background:#6a6a6a;"></div><div class="a" style="left:175px;top:435px;width:21.5px;height:21.5px;background:#6a6a6a;"></div><div class="a" style="left:203.5px;top:435px;width:88.5px;height:21.5px;background:#8ea8d2;"></div><div class="a" style="left:298px;top:435px;width:67px;height:21.5px;background:#5c5c5c;"></div><div class="a" style="left:373px;top:435px;width:176.5px;height:21.5px;background:#6a6a6a;"></div><div class="a" style="left:648px;top:435px;width:164.5px;height:21.5px;background:#6a6a6a;"></div><div class="a" style="left:748px;top:435px;width:21px;height:21.5px;background:#9a9a9a;"></div><svg style="left:38px;top:439px" width="14" height="13" viewBox="0 0 14 13"><path d="M1 4.5 L5.5 1 V3.2 C10.5 3.2 12.8 6 12 9.4 C11.4 11.6 9.4 12.4 7.6 12.2 C9.8 11.4 10.6 9.6 10 8 C9.4 6.4 7.6 6 5.5 6 V8.2 Z" fill="#1d1d1d"/></svg><div class="a" style="left:58px;top:438px;width:17px;height:16px;background:#707070;opacity:.6"></div><svg style="left:86px;top:436px" width="20" height="20" viewBox="0 0 20 20"><circle cx="10" cy="10" r="8" fill="#a9bede" stroke="#7b3f32" stroke-width="1.6"/><path d="M7.6 5.4 L7.6 14.2 L9.8 12.2 L11.4 15.4 L12.8 14.7 L11.3 11.6 L14.2 11.4 Z" fill="#10204a"/></svg><svg style="left:111.5px;top:440px" width="13" height="13" viewBox="0 0 17 17"><path d="M8.5 0.5 V16.5 M0.5 8.5 H16.5" stroke="#f7a81c" stroke-width="2.6"/><path d="M8.5 0 L10.6 2.6 H6.4 Z M8.5 17 L10.6 14.4 H6.4 Z M0 8.5 L2.6 6.4 V10.6 Z M17 8.5 L14.4 6.4 V10.6 Z" fill="#f7a81c"/></svg><svg style="left:133.5px;top:440.5px" width="12.4" height="12.4" viewBox="0 0 15 15"><rect x="0.5" y="0.5" width="14" height="14" fill="#f7a81c"/><rect x="0.5" y="7" width="7.5" height="7.5" fill="#ffd15a"/><path d="M8 7 L13 2 M13 2 H10 M13 2 V5" stroke="#7a4a00" stroke-width="1.2" fill="none"/></svg><svg style="left:155px;top:439.5px" width="13.4" height="13.4" viewBox="0 0 17 17"><path d="M3.4 11.8 A6 6 0 0 1 11 2.9" stroke="#f7a81c" stroke-width="2.6" fill="none"/><path d="M13.6 5.2 A6 6 0 0 1 6 14.1" stroke="#f7a81c" stroke-width="2.6" fill="none"/><path d="M9.4 0.4 L13.6 2.6 L10 5.4 Z M7.6 16.6 L3.4 14.4 L7 11.6 Z" fill="#f7a81c"/></svg><svg style="left:176px;top:436px" width="20" height="20" viewBox="0 0 20 20"><circle cx="10" cy="10" r="8" fill="#6a6a6a" stroke="#7b4a3c" stroke-width="1.6"/><path d="M7.6 5.4 L7.6 14.2 L9.8 12.2 L11.4 15.4 L12.8 14.7 L11.3 11.6 L14.2 11.4 Z" fill="#2a2a2a"/></svg><svg style="left:204.5px;top:436px" width="20" height="20" viewBox="0 0 20 20"><circle cx="10" cy="10" r="8" fill="#a9bede" stroke="#7a5040" stroke-width="1.7"/></svg><span class="a t" style="left:210.1px;top:439.55px;font-size:11.5px;line-height:13.5px;color:#0e1c44;font-weight:bold">X</span><svg style="left:226.8px;top:436px" width="20" height="20" viewBox="0 0 20 20"><circle cx="10" cy="10" r="8" fill="#a9bede" stroke="#7a5040" stroke-width="1.7"/></svg><span class="a t" style="left:232.4px;top:439.55px;font-size:11.5px;line-height:13.5px;color:#0e1c44;font-weight:bold">Y</span><svg style="left:249.1px;top:436px" width="20" height="20" viewBox="0 0 20 20"><circle cx="10" cy="10" r="8" fill="#a9bede" stroke="#7a5040" stroke-width="1.7"/></svg><span class="a t" style="left:254.7px;top:439.55px;font-size:11.5px;line-height:13.5px;color:#0e1c44;font-weight:bold">Z</span><svg style="left:271px;top:436.5px" width="20" height="20" viewBox="0 0 20 20"><path d="M3 2 V17 H18" stroke="#10204a" stroke-width="1.6" fill="none"/><path d="M3 0.4 L5 3.4 H1 Z M19.6 17 L16.6 15 V19 Z" fill="#10204a"/><circle cx="12.5" cy="7" r="5.6" fill="#f39a1e"/><path d="M7 7 H18 M12.5 1.4 V12.6 M8.6 3.2 Q12.5 6 16.4 3.2 M8.6 10.8 Q12.5 8 16.4 10.8 M10 2 Q7.5 7 10 12 M15 2 Q17.5 7 15 12" stroke="#a04c00" stroke-width="0.7" fill="none"/></svg><div class="a" style="left:298.5px;top:435.5px;width:21px;height:21px;background:#7a4a40;opacity:.55"></div><svg style="left:300px;top:438px" width="19" height="18" viewBox="0 0 19 18"><path d="M1 6.5 H17 V17.5 H1 Z" fill="#0b0b0b"/><path d="M1 2.6 H17 V6 H1 Z" fill="#f2f2f2"/><path d="M3 2.6 L5 6 M7 2.6 L9 6 M11 2.6 L13 6 M15 2.6 L17 6" stroke="#111" stroke-width="1.6"/><path d="M7 10 L11.5 12.4 L7 14.8 Z" fill="#f2f2f2"/></svg><svg style="left:322px;top:438px" width="19" height="18" viewBox="0 0 19 18"><path d="M1 6.5 H17 V17.5 H1 Z" fill="#0b0b0b"/><path d="M1 2.6 H17 V6 H1 Z" fill="#f2f2f2"/><path d="M3 2.6 L5 6 M7 2.6 L9 6 M11 2.6 L13 6 M15 2.6 L17 6" stroke="#111" stroke-width="1.6"/><path d="M7 10 L11.5 12.4 L7 14.8 Z" fill="#f2f2f2"/><rect x="9" y="-2.4" width="10" height="7.4" rx="1" fill="#f0642c"/><path d="M10 -0.2 L12.6 2.2 L15.4 0 L18 2.6" stroke="#4a1a00" stroke-width="1" fill="none"/></svg><svg style="left:344px;top:438px" width="19" height="18" viewBox="0 0 19 18"><path d="M1 6.5 H17 V17.5 H1 Z" fill="#0b0b0b"/><path d="M1 2.6 H17 V6 H1 Z" fill="#f2f2f2"/><path d="M3 2.6 L5 6 M7 2.6 L9 6 M11 2.6 L13 6 M15 2.6 L17 6" stroke="#111" stroke-width="1.6"/><path d="M7 10 L11.5 12.4 L7 14.8 Z" fill="#f2f2f2"/><circle cx="14.4" cy="1.4" r="4" fill="none" stroke="#f0642c" stroke-width="3"/><circle cx="14.4" cy="1.4" r="5.6" fill="none" stroke="#f0642c" stroke-width="1.4" stroke-dasharray="2 2.4"/></svg><svg style="left:376px;top:437.5px" width="18" height="18" viewBox="0 0 18 18"><path d="M9 0.6 L16.8 4 V13 L9 17.4 L1.2 13 V4 Z" fill="#58a8e8"/><path d="M9 0.6 L16.8 4 L9 8.2 L1.2 4 Z" fill="#a8d8ff"/><path d="M9 8.2 V17.4 L1.2 13 V4 Z" fill="#3f8ad4"/><path d="M9 0.6 L16.8 4 V13 L9 17.4 L1.2 13 V4 Z M1.2 4 L9 8.2 L16.8 4 M9 8.2 V17.4" stroke="#1a4a8a" stroke-width="0.7" fill="none"/></svg><svg style="left:397px;top:436.5px" width="19" height="20" viewBox="0 0 19 20"><path d="M10 1 L16 0.4 L13.6 3.4 Z" fill="#1a1a1a"/><path d="M13 3 L15 5 L8.4 12.8 L4.6 13.6 L5.6 9.8 Z" fill="#f08a1c"/><path d="M8.6 8.4 L10.6 10.4" stroke="#7a3a00" stroke-width="0.8"/><path d="M1.4 13.4 L8.8 17.2 L16.4 13.2" stroke="#e8e8e8" stroke-width="1.7" fill="none"/><circle cx="1.8" cy="13.4" r="1.5" fill="#f2f2f2"/><circle cx="16.6" cy="13.2" r="1.5" fill="#f2f2f2"/><circle cx="8.8" cy="17.4" r="1.5" fill="#f2f2f2"/></svg><svg style="left:419.5px;top:437.5px" width="18" height="18" viewBox="0 0 18 18"><path d="M9 1 L16.4 4.4 V13 L9 17 L1.6 13 V4.4 Z" fill="#1f8f55"/><path d="M9 1 L16.4 4.4 L9 8 L1.6 4.4 Z" fill="#48c888"/><path d="M9 8 V17 L1.6 13 V4.4 Z" fill="#2aa868"/><g fill="#0f4a2c"><circle cx="9" cy="1.2" r="1.2"/><circle cx="16.4" cy="4.4" r="1.2"/><circle cx="1.6" cy="4.4" r="1.2"/><circle cx="16.4" cy="13" r="1.2"/><circle cx="1.6" cy="13" r="1.2"/><circle cx="9" cy="17" r="1.2"/></g></svg><svg style="left:441.5px;top:437.5px" width="18" height="18" viewBox="0 0 18 18"><g fill="#2fb070" stroke="#126038" stroke-width="0.7"><circle cx="9" cy="3.6" r="3"/><circle cx="14" cy="6.4" r="3"/><circle cx="14" cy="11.8" r="3"/><circle cx="9" cy="14.6" r="3"/><circle cx="4" cy="11.8" r="3"/><circle cx="4" cy="6.4" r="3"/></g><circle cx="9" cy="9.1" r="2.6" fill="#e8f8ee"/></svg><svg style="left:463.5px;top:438px" width="18" height="18" viewBox="0 0 18 18"><rect x="3.2" y="-0.4" width="9.6" height="18.8" rx="4.8" transform="rotate(-38 9 9)" fill="#6c80c8"/><rect x="4.6" y="1.4" width="3" height="13" rx="1.5" transform="rotate(-38 9 9)" fill="#93a6e0"/></svg><svg style="left:484.5px;top:441px" width="21" height="15" viewBox="0 0 21 15"><path d="M4 0.5 H17 L20.6 14.5 H0.4 Z" fill="#b8d8f8"/><path d="M4 0.5 H17 L20.6 14.5 H0.4 Z M2.4 6.6 H18.6 M8.2 0.5 L6.8 14.5 M12.8 0.5 L14.2 14.5" stroke="#3a78c0" stroke-width="1" fill="none"/></svg><svg style="left:507px;top:438.5px" width="19" height="16" viewBox="0 0 19 16"><rect x="1" y="7.4" width="12" height="7.8" rx="1" fill="#0a0a0a"/><path d="M13 10 L18 7.6 V15 L13 12.6 Z" fill="#0a0a0a"/><circle cx="4.2" cy="4" r="3.4" fill="#0a0a0a"/><circle cx="10.8" cy="4" r="3.4" fill="#0a0a0a"/><circle cx="4.2" cy="4" r="1.4" fill="#d8e8f8"/><circle cx="10.8" cy="4" r="1.4" fill="#d8e8f8"/><rect x="3" y="9.4" width="5" height="2.2" fill="#d8e8f8"/></svg><svg style="left:531px;top:437px" width="14" height="19" viewBox="0 0 14 19"><path d="M7 0.6 C11 0.6 13.2 3.4 13.2 6.6 C13.2 9.6 10.4 11 10 13.4 H4 C3.6 11 0.8 9.6 0.8 6.6 C0.8 3.4 3 0.6 7 0.6 Z" fill="#f4f4f4"/><path d="M5 6 L7 12 L9 6" stroke="#999" stroke-width="0.8" fill="none"/><rect x="4.2" y="13.6" width="5.6" height="4.4" rx="1" fill="#7a7a7a"/></svg><svg style="left:651px;top:438px" width="17" height="17" viewBox="0 0 17 17"><path d="M8.5 1 L15.6 4.4 V12.4 L8.5 16 L1.4 12.4 V4.4 Z M1.4 4.4 L8.5 7.8 L15.6 4.4 M8.5 7.8 V16" stroke="#8a8a8a" stroke-width="1" fill="#757575"/></svg><svg style="left:671px;top:437px" width="19" height="19" viewBox="0 0 19 19"><g fill="none" stroke="#f09a1c" stroke-width="3.6"><path d="M5.4 3.4 A7 7 0 0 1 13.6 3.4"/><path d="M16.4 8 A7 7 0 0 1 12.4 15.6"/><path d="M6.6 15.6 A7 7 0 0 1 2.6 8"/></g><circle cx="9.5" cy="9.5" r="2.6" fill="#f5b84a"/><g stroke="#6a3a00" stroke-width="0.6" fill="none"><circle cx="9.5" cy="9.5" r="8.8"/><circle cx="9.5" cy="9.5" r="5.2"/></g></svg><svg style="left:693.5px;top:442.5px" width="7" height="7" viewBox="0 0 7 7"><circle cx="3.5" cy="3.5" r="2.4" fill="none" stroke="#0c0c0c" stroke-width="1.7"/></svg><svg style="left:704px;top:437.5px" width="22" height="18" viewBox="0 0 22 18"><g fill="#f2a01e" stroke="#7a4a00" stroke-width="0.5"><circle cx="10" cy="2.6" r="2.1"/><circle cx="2.6" cy="9.6" r="2.1"/><circle cx="17.2" cy="9.6" r="2.1"/><circle cx="10" cy="16" r="2.1"/></g></svg><svg style="left:727px;top:437px" width="19" height="19" viewBox="0 0 19 19"><circle cx="9.5" cy="9.5" r="8.6" fill="#27a868" stroke="#0e5030" stroke-width="1"/><path d="M9.5 9.5 L3.4 6 M9.5 9.5 L15.6 6 M9.5 9.5 V16.6" stroke="#0b4026" stroke-width="2.4"/><circle cx="9.5" cy="9.5" r="2" fill="#6ce0a8"/><circle cx="6.4" cy="5.4" r="2.2" fill="#7fe8b8" opacity=".7"/></svg><svg style="left:748px;top:435px" width="21" height="21" viewBox="0 0 21 21"><circle cx="7" cy="7" r="5.6" fill="#2a62c8"/><circle cx="14" cy="5.4" r="4.6" fill="#3a78dc"/><circle cx="5.6" cy="5.2" r="1.8" fill="#9cc0f8"/><path d="M11.4 11 H16.6 V15.4 H19.4 L14 20.6 L8.6 15.4 H11.4 Z" fill="#e8281e"/></svg><svg style="left:770px;top:436px" width="21" height="20" viewBox="0 0 21 20"><g fill="#f08a1c"><path d="M0.6 5 L6.6 10 L0.6 15 L3 10 Z"/><path d="M20.4 5 L14.4 10 L20.4 15 L18 10 Z"/><path d="M5.6 0.6 L10.5 5.6 L15.4 0.6 L10.5 2.8 Z"/><path d="M5.6 19.4 L10.5 14.4 L15.4 19.4 L10.5 17.2 Z"/></g><circle cx="10.5" cy="10" r="2.6" fill="#f4f4f4"/></svg><svg style="left:793px;top:437px" width="19" height="18" viewBox="0 0 19 18"><g fill="none" stroke="#8c8c8c" stroke-width="1.1"><path d="M2 17 V9 L6 5 V13 Z M6 5 H14 L17 9 V17 M9.4 17 V3 L12 1 V14"/></g></svg><!-- left column + IPR panel -->
<div class="a" style="left:28px;top:458.6px;width:25px;height:590px;background:#474747;"></div><div class="a" style="left:52.6px;top:458.6px;width:0.8px;height:586px;background:#3a3a3a;"></div><div class="a" style="left:30px;top:459.5px;width:20px;height:0.8px;background:#666;"></div><div class="a" style="left:30px;top:461px;width:20px;height:0.8px;background:#666;"></div><div class="a" style="left:29.6px;top:464px;width:21.6px;height:22.5px;background:#6c6c6c;"></div><svg style="left:30px;top:465px" width="21" height="20" viewBox="0 0 21 20"><rect width="21" height="20" fill="#7a7a7a"/><path d="M2 14 C5 6 9 4 12 8 C14 11 17 6 19 3 M3 18 C7 12 12 14 14 10" stroke="#9c9c9c" stroke-width="1.4" fill="none"/></svg><div class="a" style="left:29.6px;top:491.5px;width:21.6px;height:23px;background:#8ea8d2;"></div><svg style="left:30.5px;top:493px" width="20" height="20" viewBox="0 0 20 20"><path d="M10 2 L18 5.4 V14 L10 18 L2 14 V5.4 Z" fill="#4a4a4a"/><path d="M10 2 L18 5.4 L10 9 L2 5.4 Z" fill="#767676"/><path d="M10 9 V18 L2 14 V5.4 Z" fill="#5c5c5c"/><path d="M10 2 L18 5.4 V14 L10 18 L2 14 V5.4 Z M2 5.4 L10 9 L18 5.4 M10 9 V18" stroke="#a0622a" stroke-width="1.3" fill="none"/></svg><div class="a" style="left:29.6px;top:516px;width:21.6px;height:23px;background:#5f5f5f;"></div><svg style="left:30.5px;top:517.5px" width="20" height="20" viewBox="0 0 20 20"><path d="M10 2 L18 5.4 V14 L10 18 L2 14 V5.4 Z" fill="#4a4a4a"/><path d="M10 2 L18 5.4 L10 9 L2 5.4 Z" fill="#767676"/><path d="M10 9 V18 L2 14 V5.4 Z" fill="#5c5c5c"/><path d="M10 2 L18 5.4 V14 L10 18 L2 14 V5.4 Z M2 5.4 L10 9 L18 5.4 M10 9 V18" stroke="#a0622a" stroke-width="1.3" fill="none"/><g fill="#f4f4f4"><rect x="9" y="8" width="3" height="3"/><rect x="15" y="8" width="3" height="3"/><rect x="12" y="11" width="3" height="3"/><rect x="9" y="14" width="3" height="3"/><rect x="15" y="14" width="3" height="3"/></g><g fill="#111"><rect x="12" y="8" width="3" height="3"/><rect x="9" y="11" width="3" height="3"/><rect x="15" y="11" width="3" height="3"/><rect x="12" y="14" width="3" height="3"/></g></svg><div class="a" style="left:29.6px;top:540px;width:21.6px;height:21px;background:#5f5f5f;"></div><svg style="left:31px;top:542px" width="19" height="16" viewBox="0 0 19 16"><path d="M9.5 0.6 L18.4 8 L9.5 15.4 L0.6 8 Z" fill="#d8801c"/><path d="M3.6 5.4 L12.6 12.8 M6.6 3 L15.6 10.4 M15.4 5.4 L6.4 12.8 M12.4 3 L3.4 10.4" stroke="#6a3600" stroke-width="0.9"/></svg><div class="a" style="left:29.6px;top:562px;width:21.6px;height:22px;background:#5f5f5f;"></div><svg style="left:30.5px;top:563px" width="20" height="20" viewBox="0 0 20 20"><path d="M10 2 L18 5.4 V14 L10 18 L2 14 V5.4 Z" fill="#4a4a4a"/><path d="M10 2 L18 5.4 L10 9 L2 5.4 Z" fill="#767676"/><path d="M10 9 V18 L2 14 V5.4 Z" fill="#5c5c5c"/><path d="M10 2 L18 5.4 V14 L10 18 L2 14 V5.4 Z M2 5.4 L10 9 L18 5.4 M10 9 V18" stroke="#6e5a4a" stroke-width="1.3" fill="none"/><circle cx="14.4" cy="5.6" r="1.8" fill="#f09a1c"/><circle cx="5" cy="6.4" r="1.2" fill="#f09a1c"/></svg><div class="a" style="left:29.6px;top:585px;width:21.6px;height:21px;background:#5f5f5f;"></div><svg style="left:30.5px;top:586px" width="20" height="20" viewBox="0 0 20 20"><path d="M10 2 L18 5.4 V14 L10 18 L2 14 V5.4 Z" fill="#4a4a4a"/><path d="M10 2 L18 5.4 L10 9 L2 5.4 Z" fill="#767676"/><path d="M10 9 V18 L2 14 V5.4 Z" fill="#5c5c5c"/><path d="M10 2 L18 5.4 V14 L10 18 L2 14 V5.4 Z M2 5.4 L10 9 L18 5.4 M10 9 V18" stroke="#6e5a4a" stroke-width="1.3" fill="none"/><path d="M10 9 V18 M2 5.4 L10 9" stroke="#f09a1c" stroke-width="1.5"/></svg><div class="a" style="left:29.6px;top:607px;width:21.6px;height:21px;background:#5f5f5f;"></div><svg style="left:30.5px;top:607.5px" width="20" height="20" viewBox="0 0 20 20"><path d="M10 2 L18 5.4 V14 L10 18 L2 14 V5.4 Z" fill="#5c5c5c"/><path d="M10 2 L18 5.4 L10 9 L2 5.4 Z" fill="#f0962a"/><path d="M10 9 V18 L2 14 V5.4 Z" fill="#6e6e6e"/></svg><div class="a" style="left:29.6px;top:635px;width:21.6px;height:22px;background:#5f5f5f;"></div><svg style="left:32px;top:637px" width="18" height="18" viewBox="0 0 18 18"><path d="M3.4 2 V14.6 H16" stroke="#e8861c" stroke-width="2.5" fill="none"/></svg><div class="a" style="left:29.6px;top:657.5px;width:21.6px;height:22px;background:#8ea8d2;"></div><svg style="left:30px;top:658.5px" width="21" height="20" viewBox="0 0 21 20"><path d="M1 8 C4 2 8 3 9 7 C10 10 13 9 15 6" stroke="#10204a" stroke-width="1.2" fill="none"/><rect x="11" y="6" width="8" height="13" rx="4" fill="#f09a1c" stroke="#6a3a00" stroke-width="0.8"/><path d="M15 6 V11 M11 11 H19" stroke="#6a3a00" stroke-width="0.7"/></svg><div class="a" style="left:29.6px;top:680px;width:21.6px;height:22px;background:#8ea8d2;"></div><svg style="left:31px;top:681px" width="19" height="19" viewBox="0 0 19 19"><circle cx="9.5" cy="9.5" r="8.2" fill="#6e6e6e" stroke="#2a2a2a" stroke-width="1"/></svg><span class="a t" style="left:36.4px;top:684.5px;font-size:11px;line-height:13px;color:#141414;font-weight:bold">S</span><div class="a" style="left:29.6px;top:709px;width:21.6px;height:21.5px;background:#5f5f5f;"></div><svg style="left:31px;top:710.5px" width="19" height="18" viewBox="0 0 19 18"><g transform="rotate(-42 9.5 9)"><path d="M3 1.6 H7.2 V9 A2.3 2.3 0 0 0 11.8 9 V1.6 H16 V9 A6.5 6.5 0 0 1 3 9 Z" fill="#f09a1c" stroke="#2a1800" stroke-width="1.1"/><path d="M3 1.6 H7.2 V4.2 H3 Z M11.8 1.6 H16 V4.2 H11.8 Z" fill="#2e2e2e"/></g></svg><div class="a" style="left:29.6px;top:737px;width:21.6px;height:23px;background:#8ea8d2;"></div><svg style="left:30px;top:738px" width="21" height="21" viewBox="0 0 21 21"><path d="M9.5 1 L19 7 L9.5 13 L0.6 7 Z" fill="#5a5a5a"/><path d="M3.6 5 L12.6 11 M6.6 3 L15.6 9 M15.4 5 L6.4 11 M12.4 3 L3.4 9" stroke="#2a2a2a" stroke-width="0.8"/><rect x="13" y="13" width="7" height="6" rx="1" fill="#10204a"/><path d="M14.6 13 V11.4 A1.9 1.9 0 0 1 18.4 11.4 V13" stroke="#10204a" stroke-width="1.2" fill="none"/></svg><div class="a" style="left:29.6px;top:760.5px;width:21.6px;height:21px;background:#5f5f5f;"></div><svg style="left:30px;top:761px" width="21" height="20" viewBox="0 0 21 20"><path d="M9.5 1 L19 7 L9.5 13 L0.6 7 Z" fill="#3a3a3a"/><path d="M3.6 5 L12.6 11 M6.6 3 L15.6 9 M15.4 5 L6.4 11 M12.4 3 L3.4 9" stroke="#222" stroke-width="0.8"/><path d="M13 11.5 A3.4 3.4 0 1 0 19 11.5" stroke="#f09a1c" stroke-width="1.6" fill="none"/><circle cx="16" cy="14.6" r="1.1" fill="#f09a1c"/></svg><span class="a t" style="left:27.5px;top:1032.5px;font-size:9.6px;line-height:10px;color:#8e8e8e;font-weight:bold;font-style:italic;transform-origin:0 0;transform:rotate(-90deg);letter-spacing:-0.3px">MAXON</span><span class="a t" style="left:39.5px;top:1032.5px;font-size:9.4px;line-height:10px;color:#7c7c7c;transform-origin:0 0;transform:rotate(-90deg);letter-spacing:0.1px">CINEMA 4D</span><div class="a" style="left:53.5px;top:459.8px;width:760px;height:12.4px;background:#333;"></div><div class="a" style="left:55.5px;top:462px;width:3.6px;height:7px;background:#c4c4c4;"></div><div class="a" style="left:53.5px;top:472.2px;width:760px;height:15.6px;background:#4d4d4d;"></div><div class="a" style="left:53.5px;top:472.2px;width:107px;height:15.6px;background:#434343;"></div><div class="a" style="left:57px;top:476px;width:6px;height:7px;background:repeating-linear-gradient(0deg,#5e5e5e 0 1px,transparent 1px 2.4px)"></div><span class="a t" style="left:72px;top:475.55px;font-size:6.9px;line-height:8.9px;color:#e39a2c;">06 口红水波焦散案例 白</span><div class="a" style="left:147.5px;top:476.5px;width:5.6px;height:5.6px;border:0.9px solid #8a8a8a;border-radius:50%"></div><div class="a" style="left:160.5px;top:472.2px;width:13px;height:15.6px;background:#454545;"></div><span class="a t" style="left:165px;top:476.0px;font-size:6px;line-height:8px;color:#777;">+</span><div class="a" style="left:53.5px;top:487.8px;width:760px;height:1.4px;background:#3e3e3e;"></div><div class="a" style="left:53.5px;top:489.2px;width:379px;height:11.4px;background:#333;"></div><div class="a" style="left:55.5px;top:491px;width:3.6px;height:7px;background:#c4c4c4;"></div><span class="a t" style="left:68px;top:489.9px;font-size:7px;line-height:9px;color:#a4a4a4;">Redshift IPR</span><div class="a" style="left:53.5px;top:500.6px;width:379px;height:14px;background:#474747;"></div><div class="a" style="left:57px;top:504px;width:6px;height:7px;background:repeating-linear-gradient(90deg,#646464 0 1px,transparent 1px 2.4px)"></div><span class="a t" style="left:69px;top:505.15px;font-size:6.9px;line-height:8.9px;color:#b0b0b0;">查看</span><div class="a" style="left:53.5px;top:514.6px;width:379px;height:1px;background:#3c3c3c;"></div><div class="a" style="left:53.5px;top:515.6px;width:379px;height:23.4px;background:#464646;"></div><div class="a" style="left:58px;top:521px;width:10px;height:10.5px;background:#7d7d7d;"></div><svg style="left:73.5px;top:520.5px" width="12.5" height="12" viewBox="0 0 12.5 12"><path d="M2 5 A4.4 4.4 0 0 1 10 3.6 M10.6 7 A4.4 4.4 0 0 1 2.4 8.4" stroke="#8a8a8a" stroke-width="1.7" fill="none"/><path d="M8.4 4.6 H12 V1 Z M4.2 7.4 H0.6 V11 Z" fill="#8a8a8a"/></svg><svg style="left:93px;top:520px" width="10" height="12" viewBox="0 0 10 12"><rect x="0.6" y="5.4" width="8.8" height="6.2" rx="0.8" fill="#8a8a8a"/><path d="M2.4 5.4 V3.6 A2.6 2.6 0 0 1 7.6 3.6 V5.4" stroke="#8a8a8a" stroke-width="1.4" fill="none"/></svg><svg style="left:109px;top:521px" width="13" height="11" viewBox="0 0 13 11"><path d="M0.5 2.6 H3.6 L4.6 0.6 H8.4 L9.4 2.6 H12.5 V10.5 H0.5 Z" fill="#8a8a8a"/><circle cx="6.5" cy="6.4" r="2.5" fill="#464646"/><circle cx="6.5" cy="6.4" r="1.2" fill="#8a8a8a"/></svg><div class="a" style="left:127.5px;top:521px;width:11px;height:11px;background:repeating-linear-gradient(90deg,#868686 0 1.6px,transparent 1.6px 3.9px);-webkit-mask:repeating-linear-gradient(0deg,#000 0 1.6px,transparent 1.6px 3.9px);mask:repeating-linear-gradient(0deg,#000 0 1.6px,transparent 1.6px 3.9px)"></div><div class="a" style="left:143.5px;top:520.5px;width:12px;height:12px;border:1.5px solid #868686;border-radius:50%"></div><svg style="left:161px;top:520.5px" width="12" height="12" viewBox="0 0 12 12"><path d="M6 0.5 V11.5 M1.2 3.2 L10.8 8.8 M10.8 3.2 L1.2 8.8" stroke="#7c7c7c" stroke-width="1.1"/><circle cx="6" cy="6" r="1.6" fill="#7c7c7c"/></svg><svg style="left:178px;top:520px" width="13" height="13" viewBox="0 0 13 13"><rect x="1" y="2.6" width="9.6" height="9.6" rx="1.2" fill="none" stroke="#888" stroke-width="1.3"/><path d="M3.4 0.8 H12.2 V9.4" stroke="#888" stroke-width="1.1" fill="none"/></svg><div class="a" style="left:196px;top:521px;width:80.5px;height:11.4px;background:#787878;border-radius:1.5px"></div><span class="a t" style="left:199.5px;top:522.15px;font-size:6.9px;line-height:8.9px;color:#d2d2d2;">Beauty</span><svg style="left:268.5px;top:525.2px" width="5" height="3" viewBox="0 0 5 3"><path d="M0 0 H5 L2.5 3 Z" fill="#e4e4e4"/></svg><div class="a" style="left:339.5px;top:521px;width:29px;height:11.4px;background:#3b3b3b;border-radius:1px"></div><span class="a t" style="left:342.5px;top:522.4px;font-size:6.6px;line-height:8.6px;color:#a8a8a8;">100 % ↕</span><div class="a" style="left:372px;top:521px;width:55px;height:11.4px;background:#787878;border-radius:1.5px"></div><span class="a t" style="left:376px;top:522.35px;font-size:6.7px;line-height:8.7px;color:#d0d0d0;">适合窗口</span><svg style="left:419.5px;top:525.2px" width="5" height="3" viewBox="0 0 5 3"><path d="M0 0 H5 L2.5 3 Z" fill="#e4e4e4"/></svg><div class="a" style="left:53.5px;top:539px;width:379px;height:351px;background:#474747;"></div><div class="a" style="left:422.8px;top:541px;width:6px;height:322px;background:#424242;"></div><div class="a" style="left:55px;top:864.2px;width:368px;height:5.6px;background:#414141;"></div><div class="a" style="left:55px;top:871.5px;width:376px;height:1px;background:#404040;"></div><div class="a" style="left:429.5px;top:489px;width:0.8px;height:400px;background:#3d3d3d;"></div><svg style="left:137.2px;top:539.8px" width="200.2" height="319.8"><use href="#water" width="200.2" height="319.8"/><use href="#lip" x="52.8" y="60" width="100" height="220"/><path d="M170.6 222.6 V233.6 L173.2 231.2 L175 235.4 L176.8 234.6 L175 230.6 L178.4 230.2 Z" fill="#d9b5a2" stroke="#8c6a5e" stroke-width="0.7"/></svg><div class="a" style="left:56.5px;top:882px;width:48.5px;height:5.2px;background:#3a3a3a;"></div><div class="a" style="left:56.5px;top:882px;width:40.5px;height:5.2px;background:#88a6cc;"></div><span class="a t" style="left:106.5px;top:880.05px;font-size:7.3px;line-height:9.3px;color:#a6a6a6;">Irradiance cache: Creating secondary 85%</span><!-- viewport panel -->
<div class="a" style="left:432.5px;top:489.2px;width:381px;height:401px;background:#474747;"></div><div class="a" style="left:432.5px;top:489.2px;width:1.2px;height:401px;background:#3c3c3c;"></div><div class="a" style="left:440px;top:492.5px;width:5.4px;height:6.6px;background:repeating-linear-gradient(0deg,#606060 0 1px,transparent 1px 2.3px)"></div><span class="a t" style="left:450.7px;top:491.55px;font-size:6.9px;line-height:8.9px;color:#a2a2a2;">查看</span><span class="a t" style="left:473.3px;top:491.55px;font-size:6.9px;line-height:8.9px;color:#a2a2a2;">摄像机</span><span class="a t" style="left:502.8px;top:491.55px;font-size:6.9px;line-height:8.9px;color:#a2a2a2;">显示</span><span class="a t" style="left:524.8px;top:491.55px;font-size:6.9px;line-height:8.9px;color:#a2a2a2;">选项</span><span class="a t" style="left:547px;top:491.55px;font-size:6.9px;line-height:8.9px;color:#a2a2a2;">过滤</span><span class="a t" style="left:569px;top:491.55px;font-size:6.9px;line-height:8.9px;color:#a2a2a2;">面板</span><span class="a t" style="left:592px;top:491.55px;font-size:6.9px;line-height:8.9px;color:#a2a2a2;">ProRender</span><svg style="left:773px;top:491.5px" width="9" height="9" viewBox="0 0 9 9"><path d="M4.5 0 L6.2 2.4 H5.1 V3.9 H6.6 V2.8 L9 4.5 L6.6 6.2 V5.1 H5.1 V6.6 H6.2 L4.5 9 L2.8 6.6 H3.9 V5.1 H2.4 V6.2 L0 4.5 L2.4 2.8 V3.9 H3.9 V2.4 H2.8 Z" fill="#222"/></svg><svg style="left:784px;top:491.5px" width="7" height="9" viewBox="0 0 7 9"><path d="M2.4 0 H4.6 V4.6 H7 L3.5 9 L0 4.6 H2.4 Z" fill="#222"/></svg><svg style="left:792.5px;top:491.5px" width="9" height="9" viewBox="0 0 9 9"><path d="M1.6 6.4 A3.4 3.4 0 1 1 7.4 6.4" stroke="#222" stroke-width="1.6" fill="none"/><path d="M4.5 3 V6" stroke="#222" stroke-width="1.4"/></svg><svg style="left:803.5px;top:491.5px" width="9" height="9" viewBox="0 0 9 9"><rect x="0.6" y="0.6" width="7.8" height="7.8" fill="none" stroke="#2a2a2a" stroke-width="1.1"/><path d="M0.6 2.8 H8.4" stroke="#2a2a2a" stroke-width="1.2"/></svg><div class="a" style="left:434.8px;top:502.6px;width:378px;height:387.6px;background:#525252;border:1px solid #7e7e7e"></div><span class="a t" style="left:438px;top:506.3px;font-size:6.8px;line-height:8.8px;color:#9a9a9a;">右视图</span><div class="a" style="left:439.6px;top:517px;width:62.4px;height:11.9px;background:#363636;"></div><span class="a t" style="left:441.5px;top:519.07px;font-size:7.25px;line-height:9.25px;color:#d8d8d8;">Simulation "场景":</span><div class="a" style="left:439.6px;top:528.6px;width:126.4px;height:13.600000000000001px;background:#363636;"></div><span class="a t" style="left:445.5px;top:531.52px;font-size:7.25px;line-height:9.25px;color:#d8d8d8;">&gt; Fluid "流体" particle count: 106655</span><div class="a" style="left:439.6px;top:541.9px;width:108px;height:13.600000000000001px;background:#363636;"></div><span class="a t" style="left:445.5px;top:544.82px;font-size:7.25px;line-height:9.25px;color:#d8d8d8;">&gt; Emitter "发射器" Emitter ID: 1</span><div class="a" style="left:439.6px;top:555.1999999999999px;width:137.2px;height:13.600000000000001px;background:#363636;"></div><span class="a t" style="left:445.5px;top:558.12px;font-size:7.25px;line-height:9.25px;color:#d8d8d8;">&gt; Mesher "网格" polygon count: 563988</span><div class="a" style="left:439.6px;top:568.4999999999999px;width:108px;height:13.600000000000001px;background:#363636;"></div><span class="a t" style="left:445.5px;top:571.42px;font-size:7.25px;line-height:9.25px;color:#d8d8d8;">&gt; Emitter "发射器" Emitter ID: 8</span><div class="a" style="left:627.4px;top:503.6px;width:1.4px;height:386px;background:#2e6b38;"></div><div class="a" style="left:458.2px;top:850px;width:0.9px;height:13px;background:#3fae4a;"></div><div class="a" style="left:458.2px;top:863px;width:0.9px;height:9px;background:#c0392b;"></div><span class="a t" style="left:456.5px;top:844.25px;font-size:4.5px;line-height:6.5px;color:#3fae4a;">Y</span><svg style="left:455.5px;top:719.5px" width="8" height="17" viewBox="0 0 8 17"><path d="M7.6 0.8 H3.6 L0.8 4 V13 L3.6 16.2 H7.6 Z" fill="#151515" stroke="#e8921c" stroke-width="1.3"/></svg><!-- right side: object manager + attribute manager -->
<div class="a" style="left:814px;top:458.6px;width:1.6px;height:586px;background:#3a3a3a;"></div><div class="a" style="left:815.6px;top:434.6px;width:388px;height:611px;background:#474747;"></div><div class="a" style="left:820px;top:439.5px;width:6px;height:7px;background:repeating-linear-gradient(0deg,#606060 0 1px,transparent 1px 2.3px)"></div><span class="a t" style="left:832.4px;top:438.55px;font-size:6.9px;line-height:8.9px;color:#a6a6a6;">文件</span><span class="a t" style="left:855px;top:438.55px;font-size:6.9px;line-height:8.9px;color:#a6a6a6;">编辑</span><span class="a t" style="left:877px;top:438.55px;font-size:6.9px;line-height:8.9px;color:#a6a6a6;">查看</span><span class="a t" style="left:899.2px;top:438.55px;font-size:6.9px;line-height:8.9px;color:#a6a6a6;">对象</span><span class="a t" style="left:921.7px;top:438.55px;font-size:6.9px;line-height:8.9px;color:#a6a6a6;">标签</span><span class="a t" style="left:944px;top:438.55px;font-size:6.9px;line-height:8.9px;color:#a6a6a6;">书签</span><svg style="left:1168px;top:440px" width="7" height="6" viewBox="0 0 7 6"><path d="M0 3 L3 0 V6 Z M7 3 L4 0 V6 Z" fill="#2a2a2a"/></svg><div class="a" style="left:1180px;top:440px;width:6px;height:5px;border:1px solid #2a2a2a;border-radius:2px"></div><div class="a" style="left:1194px;top:438.5px;width:7px;height:8.5px;background:#222;"></div><div class="a" style="left:1196px;top:441px;width:3px;height:3.5px;background:#777;"></div><div class="a" style="left:817.4px;top:456.6px;width:20.6px;height:133px;background:#6a6a6a;"></div><svg style="left:818px;top:456.7px" width="19.2" height="21.2" viewBox="0 0 19.2 21.2"><path d="M9.6 0.6 L18.4 5.4 V15.8 L9.6 20.6 L0.8 15.8 V5.4 Z" fill="#f28a7e"/><path d="M9.6 1.8 L17.4 6 V15.2 L9.6 19.4 L1.8 15.2 V6 Z" fill="#ee5c50"/><path d="M9.6 3 L16.2 6.6 V14.6 L9.6 18.2 L3 14.6 V6.6 Z" fill="#e62e26"/><circle cx="9.6" cy="10.6" r="5.2" fill="#d81e1a" stroke="#8a0c0a" stroke-width="1"/></svg><svg style="left:818px;top:478.9px" width="19.2" height="21.2" viewBox="0 0 19.2 21.2"><path d="M9.6 0.6 L18.4 5.4 V15.8 L9.6 20.6 L0.8 15.8 V5.4 Z" fill="#f28a7e"/><path d="M9.6 1.8 L17.4 6 V15.2 L9.6 19.4 L1.8 15.2 V6 Z" fill="#ee5c50"/><path d="M9.6 3 L16.2 6.6 V14.6 L9.6 18.2 L3 14.6 V6.6 Z" fill="#e62e26"/><circle cx="9.6" cy="10.6" r="5.2" fill="#d81e1a" stroke="#8a0c0a" stroke-width="1"/><path d="M5.6 8.6 H13.6" stroke="#8a0c0a" stroke-width="0.8"/></svg><svg style="left:818px;top:501.09999999999997px" width="19.2" height="21.2" viewBox="0 0 19.2 21.2"><path d="M9.6 0.6 L18.4 5.4 V15.8 L9.6 20.6 L0.8 15.8 V5.4 Z" fill="#f28a7e"/><path d="M9.6 1.8 L17.4 6 V15.2 L9.6 19.4 L1.8 15.2 V6 Z" fill="#ee5c50"/><path d="M9.6 3 L16.2 6.6 V14.6 L9.6 18.2 L3 14.6 V6.6 Z" fill="#e62e26"/><path d="M4.6 8 H7 L7.8 6.6 H11.4 L12.2 8 H14.6 V14.8 H4.6 Z" fill="#9a0e0c"/><circle cx="9.6" cy="11.2" r="2" fill="#e8302a"/></svg><svg style="left:818px;top:523.3px" width="19.2" height="21.2" viewBox="0 0 19.2 21.2"><path d="M9.6 0.6 L18.4 5.4 V15.8 L9.6 20.6 L0.8 15.8 V5.4 Z" fill="#f28a7e"/><path d="M9.6 1.8 L17.4 6 V15.2 L9.6 19.4 L1.8 15.2 V6 Z" fill="#ee5c50"/><path d="M9.6 3 L16.2 6.6 V14.6 L9.6 18.2 L3 14.6 V6.6 Z" fill="#e62e26"/><path d="M9.6 5 C12.6 5 13.8 7 13.8 8.8 C13.8 11 12 12 11.6 13.8 L9.6 17 L7.6 13.8 C7.2 12 5.4 11 5.4 8.8 C5.4 7 6.6 5 9.6 5 Z" fill="none" stroke="#8a0c0a" stroke-width="1.4"/><path d="M9.6 9 V13" stroke="#8a0c0a" stroke-width="1.2"/></svg><svg style="left:818px;top:545.4px" width="19.2" height="21.2" viewBox="0 0 19.2 21.2"><path d="M9.6 0.6 L18.4 5.4 V15.8 L9.6 20.6 L0.8 15.8 V5.4 Z" fill="#f28a7e"/><path d="M9.6 1.8 L17.4 6 V15.2 L9.6 19.4 L1.8 15.2 V6 Z" fill="#ee5c50"/><path d="M9.6 3 L16.2 6.6 V14.6 L9.6 18.2 L3 14.6 V6.6 Z" fill="#e62e26"/><path d="M4.6 11.6 A5 5 0 0 1 14.6 11.6 Z" fill="#d81e1a" stroke="#8a0c0a" stroke-width="1"/><path d="M4.6 11.6 H14.6 V13.4 A5 3 0 0 1 4.6 13.4 Z" fill="#c41a16" stroke="#8a0c0a" stroke-width="1"/></svg><svg style="left:818px;top:567.6999999999999px" width="19.2" height="21.2" viewBox="0 0 19.2 21.2"><path d="M9.6 0.6 L18.4 5.4 V15.8 L9.6 20.6 L0.8 15.8 V5.4 Z" fill="#f28a7e"/><path d="M9.6 1.8 L17.4 6 V15.2 L9.6 19.4 L1.8 15.2 V6 Z" fill="#ee5c50"/><path d="M9.6 3 L16.2 6.6 V14.6 L9.6 18.2 L3 14.6 V6.6 Z" fill="#e62e26"/><path d="M9.6 5.6 L14.2 8 V13.6 L9.6 16 L5 13.6 V8 Z M5 8 L9.6 10.4 L14.2 8 M9.6 10.4 V16" fill="none" stroke="#8a0c0a" stroke-width="1.2"/></svg><div class="a" style="left:840px;top:451.7px;width:363.5px;height:12.6px;background:#4e4e4e;"></div><div class="a" style="left:840px;top:464.09999999999997px;width:363.5px;height:12.6px;background:#454545;"></div><div class="a" style="left:840px;top:476.5px;width:363.5px;height:12.6px;background:#4e4e4e;"></div><div class="a" style="left:840px;top:488.9px;width:363.5px;height:12.6px;background:#454545;"></div><div class="a" style="left:840px;top:501.3px;width:363.5px;height:12.6px;background:#4e4e4e;"></div><div class="a" style="left:840px;top:513.7px;width:363.5px;height:12.6px;background:#454545;"></div><div class="a" style="left:840px;top:526.1px;width:363.5px;height:12.6px;background:#4e4e4e;"></div><div class="a" style="left:840px;top:538.5px;width:363.5px;height:12.6px;background:#454545;"></div><div class="a" style="left:840px;top:550.9px;width:363.5px;height:12.6px;background:#4e4e4e;"></div><div class="a" style="left:840px;top:563.3px;width:363.5px;height:12.6px;background:#454545;"></div><div class="a" style="left:840px;top:575.7px;width:363.5px;height:12.6px;background:#4e4e4e;"></div><div class="a" style="left:840px;top:451.7px;width:363.5px;height:0.8px;background:#3c3c3c;"></div><div class="a" style="left:913.2px;top:451.7px;width:1px;height:282px;background:#3a3a3a;"></div><div class="a" style="left:937.6px;top:451.7px;width:1px;height:282px;background:#565656;"></div><div class="a" style="left:1199.5px;top:451.7px;width:0.8px;height:282px;background:#404040;"></div><div class="a" style="left:845.6px;top:460px;width:0.8px;height:122px;background:#7a7a7a;"></div><div class="a" style="left:845.6px;top:482.5px;width:4.5px;height:0.8px;background:#7a7a7a;"></div><div class="a" style="left:845.6px;top:494.9px;width:4.5px;height:0.8px;background:#7a7a7a;"></div><div class="a" style="left:845.6px;top:519.7px;width:4.5px;height:0.8px;background:#7a7a7a;"></div><div class="a" style="left:845.6px;top:532.1px;width:4.5px;height:0.8px;background:#7a7a7a;"></div><div class="a" style="left:845.6px;top:544.5px;width:4.5px;height:0.8px;background:#7a7a7a;"></div><div class="a" style="left:845.6px;top:556.9px;width:4.5px;height:0.8px;background:#7a7a7a;"></div><div class="a" style="left:851.5px;top:462.09999999999997px;width:0.8px;height:8.4px;background:#7a7a7a;"></div><div class="a" style="left:851.5px;top:470.09999999999997px;width:5px;height:0.8px;background:#7a7a7a;"></div><div class="a" style="left:842.6px;top:454.9px;width:6px;height:6px;background:#474747;border:0.8px solid #8a8a8a"></div><div class="a" style="left:844px;top:457.5px;width:3.2px;height:0.8px;background:#aaa;"></div><div class="a" style="left:845.2px;top:456.29999999999995px;width:0.8px;height:3.2px;background:#aaa;"></div><div class="a" style="left:842.6px;top:504.5px;width:6px;height:6px;background:#474747;border:0.8px solid #8a8a8a"></div><div class="a" style="left:844px;top:507.1px;width:3.2px;height:0.8px;background:#aaa;"></div><div class="a" style="left:845.2px;top:505.9px;width:0.8px;height:3.2px;background:#aaa;"></div><div class="a" style="left:842.6px;top:566.5px;width:6px;height:6px;background:#474747;border:0.8px solid #8a8a8a"></div><div class="a" style="left:844px;top:569.1px;width:3.2px;height:0.8px;background:#aaa;"></div><div class="a" style="left:845.2px;top:567.9px;width:0.8px;height:3.2px;background:#aaa;"></div><div class="a" style="left:842.6px;top:578.9000000000001px;width:6px;height:6px;background:#474747;border:0.8px solid #8a8a8a"></div><div class="a" style="left:844px;top:581.5000000000001px;width:3.2px;height:0.8px;background:#aaa;"></div><div class="a" style="left:845.2px;top:580.3000000000001px;width:0.8px;height:3.2px;background:#aaa;"></div><svg style="left:850px;top:452.5px" width="10" height="10.8" viewBox="0 0 10 10.8"><path d="M5 0.2 L9.6 2.8 V8 L5 10.6 L0.4 8 V2.8 Z" fill="#e8362e"/><path d="M5 3 L7.4 4.4 V7 L5 8.4 L2.6 7 V4.4 Z" fill="#a81410"/></svg><span class="a t" style="left:862.2px;top:453.3px;font-size:7.4px;line-height:9.4px;color:#a0a0a0;">Redshift 天空</span><svg style="left:915.6px;top:453.9px" width="8" height="8" viewBox="0 0 8 8"><rect x="0.4" y="0.4" width="7.2" height="7.2" rx="1" fill="#8c8c8c"/><path d="M1.6 4.2 L3.2 6 L6.4 1.8" stroke="#5a5a5a" stroke-width="1.1" fill="none"/></svg><div class="a" style="left:926.6px;top:454.7px;width:1.9px;height:1.9px;background:#6a6a6a;border-radius:50%"></div><div class="a" style="left:926.6px;top:459.09999999999997px;width:1.9px;height:1.9px;background:#6a6a6a;border-radius:50%"></div><svg style="left:930.4px;top:454.29999999999995px" width="7" height="7" viewBox="0 0 7 7"><path d="M0.8 3.8 L2.8 5.8 L6.4 1" stroke="#3fae7c" stroke-width="1.3" fill="none"/></svg><svg style="left:857px;top:464.9px" width="10" height="10.8" viewBox="0 0 10 10.8"><path d="M5 0.2 L9.6 2.8 V8 L5 10.6 L0.4 8 V2.8 Z" fill="#e8362e"/><path d="M5 3 L7.4 4.4 V7 L5 8.4 L2.6 7 V4.4 Z" fill="#a81410"/></svg><span class="a t" style="left:869.2px;top:465.7px;font-size:7.4px;line-height:9.4px;color:#a0a0a0;">Redshift Sun</span><svg style="left:915.6px;top:466.29999999999995px" width="8" height="8" viewBox="0 0 8 8"><rect x="0.4" y="0.4" width="7.2" height="7.2" rx="1" fill="#8c8c8c"/><path d="M1.6 4.2 L3.2 6 L6.4 1.8" stroke="#5a5a5a" stroke-width="1.1" fill="none"/></svg><div class="a" style="left:926.6px;top:467.09999999999997px;width:1.9px;height:1.9px;background:#6a6a6a;border-radius:50%"></div><div class="a" style="left:926.6px;top:471.49999999999994px;width:1.9px;height:1.9px;background:#6a6a6a;border-radius:50%"></div><svg style="left:930.4px;top:466.69999999999993px" width="7" height="7" viewBox="0 0 7 7"><path d="M0.8 3.8 L2.8 5.8 L6.4 1" stroke="#3fae7c" stroke-width="1.3" fill="none"/></svg><svg style="left:850px;top:477.3px" width="10" height="10.4" viewBox="0 0 10 10.4"><path d="M5 0.6 L6.4 6 L9.6 9.6 L5 7.8 L0.4 9.6 L3.6 6 Z" fill="#6f9fe0"/><circle cx="5" cy="6.4" r="1.5" fill="#e8f0ff"/></svg><span class="a t" style="left:862.2px;top:478.1px;font-size:7.4px;line-height:9.4px;color:#f0a82a;font-weight:bold;">圆柱</span><svg style="left:915.6px;top:478.7px" width="8" height="8" viewBox="0 0 8 8"><rect x="0.4" y="0.4" width="7.2" height="7.2" rx="1" fill="#8c8c8c"/><path d="M1.6 4.2 L3.2 6 L6.4 1.8" stroke="#5a5a5a" stroke-width="1.1" fill="none"/></svg><div class="a" style="left:926.6px;top:479.5px;width:1.9px;height:1.9px;background:#6a6a6a;border-radius:50%"></div><div class="a" style="left:926.6px;top:483.9px;width:1.9px;height:1.9px;background:#6a6a6a;border-radius:50%"></div><svg style="left:849px;top:491.09999999999997px" width="12" height="8" viewBox="0 0 12 8"><rect x="2" y="2.6" width="6.4" height="4.6" fill="#101010"/><path d="M8.4 4 L11.6 2.6 V7 L8.4 5.8 Z" fill="#101010"/><circle cx="3.2" cy="1.8" r="1.7" fill="#cfdcf0"/><circle cx="6.8" cy="1.8" r="1.7" fill="#101010"/></svg><span class="a t" style="left:862.2px;top:490.5px;font-size:7.4px;line-height:9.4px;color:#a0a0a0;">RS 摄像机</span><svg style="left:915.6px;top:491.09999999999997px" width="8" height="8" viewBox="0 0 8 8"><rect x="0.4" y="0.4" width="7.2" height="7.2" rx="1" fill="#8c8c8c"/><path d="M1.6 4.2 L3.2 6 L6.4 1.8" stroke="#5a5a5a" stroke-width="1.1" fill="none"/></svg><div class="a" style="left:926.6px;top:491.9px;width:1.9px;height:1.9px;background:#6a6a6a;border-radius:50%"></div><div class="a" style="left:926.6px;top:496.29999999999995px;width:1.9px;height:1.9px;background:#6a6a6a;border-radius:50%"></div><div class="a" style="left:930.5px;top:491.7px;width:6.4px;height:6.4px;background:conic-gradient(#eee 25%,#222 0 50%,#eee 0 75%,#222 0) 0 0/3.2px 3.2px"></div><svg style="left:850px;top:502.5px" width="10" height="10" viewBox="0 0 10 10"><circle cx="5" cy="5" r="4.6" fill="#2a5cb0"/><path d="M2 3 Q5 1 8 4" stroke="#5a8ae0" stroke-width="1.4" fill="none"/></svg><span class="a t" style="left:862.2px;top:502.9px;font-size:7.4px;line-height:9.4px;color:#a0a0a0;">场景</span><svg style="left:915.6px;top:503.5px" width="8" height="8" viewBox="0 0 8 8"><rect x="0.4" y="0.4" width="7.2" height="7.2" rx="1" fill="#8c8c8c"/><path d="M1.6 4.2 L3.2 6 L6.4 1.8" stroke="#5a5a5a" stroke-width="1.1" fill="none"/></svg><div class="a" style="left:926.6px;top:504.3px;width:1.9px;height:1.9px;background:#6a6a6a;border-radius:50%"></div><div class="a" style="left:926.6px;top:508.7px;width:1.9px;height:1.9px;background:#6a6a6a;border-radius:50%"></div><svg style="left:930.4px;top:503.9px" width="7" height="7" viewBox="0 0 7 7"><path d="M0.8 3.8 L2.8 5.8 L6.4 1" stroke="#3fae7c" stroke-width="1.3" fill="none"/></svg><svg style="left:850px;top:514.5000000000001px" width="10" height="10.4" viewBox="0 0 10 10.4"><path d="M5 0.6 L6.4 6 L9.6 9.6 L5 7.8 L0.4 9.6 L3.6 6 Z" fill="#6f9fe0"/><circle cx="5" cy="6.4" r="1.5" fill="#e8f0ff"/></svg><span class="a t" style="left:862.2px;top:515.3px;font-size:7.4px;line-height:9.4px;color:#a0a0a0;">碰撞体</span><svg style="left:915.6px;top:515.9000000000001px" width="8" height="8" viewBox="0 0 8 8"><rect x="0.4" y="0.4" width="7.2" height="7.2" rx="1" fill="#8c8c8c"/><path d="M1.6 4.2 L3.2 6 L6.4 1.8" stroke="#5a5a5a" stroke-width="1.1" fill="none"/></svg><div class="a" style="left:926.6px;top:516.7px;width:1.9px;height:1.9px;background:#d8453a;border-radius:50%"></div><div class="a" style="left:926.6px;top:521.1000000000001px;width:1.9px;height:1.9px;background:#d8453a;border-radius:50%"></div><svg style="left:850px;top:527.3000000000001px" width="10" height="10" viewBox="0 0 10 10"><circle cx="5" cy="5" r="4.6" fill="#5aa0e8"/><path d="M3.4 3 H6.6 M5 3 V7.4" stroke="#e8f4ff" stroke-width="1.2"/></svg><span class="a t" style="left:862.2px;top:527.7px;font-size:7.4px;line-height:9.4px;color:#a0a0a0;">立方体</span><svg style="left:915.6px;top:528.3000000000001px" width="8" height="8" viewBox="0 0 8 8"><rect x="0.4" y="0.4" width="7.2" height="7.2" rx="1" fill="#8c8c8c"/><path d="M1.6 4.2 L3.2 6 L6.4 1.8" stroke="#5a5a5a" stroke-width="1.1" fill="none"/></svg><div class="a" style="left:926.6px;top:529.1px;width:1.9px;height:1.9px;background:#d8453a;border-radius:50%"></div><div class="a" style="left:926.6px;top:533.5000000000001px;width:1.9px;height:1.9px;background:#d8453a;border-radius:50%"></div><svg style="left:930.4px;top:528.7px" width="7" height="7" viewBox="0 0 7 7"><path d="M0.8 3.8 L2.8 5.8 L6.4 1" stroke="#3fae7c" stroke-width="1.3" fill="none"/></svg><svg style="left:850px;top:539.3000000000001px" width="10" height="10.4" viewBox="0 0 10 10.4"><path d="M5 0.6 L6.4 6 L9.6 9.6 L5 7.8 L0.4 9.6 L3.6 6 Z" fill="#6f9fe0"/><circle cx="5" cy="6.4" r="1.5" fill="#e8f0ff"/></svg><span class="a t" style="left:862.2px;top:540.1px;font-size:7.4px;line-height:9.4px;color:#a0a0a0;">平面</span><svg style="left:915.6px;top:540.7px" width="8" height="8" viewBox="0 0 8 8"><rect x="0.4" y="0.4" width="7.2" height="7.2" rx="1" fill="#8c8c8c"/><path d="M1.6 4.2 L3.2 6 L6.4 1.8" stroke="#5a5a5a" stroke-width="1.1" fill="none"/></svg><div class="a" style="left:926.6px;top:541.5px;width:1.9px;height:1.9px;background:#d8453a;border-radius:50%"></div><div class="a" style="left:926.6px;top:545.9000000000001px;width:1.9px;height:1.9px;background:#d8453a;border-radius:50%"></div><svg style="left:850px;top:551.7px" width="10" height="10.4" viewBox="0 0 10 10.4"><path d="M5 0.6 L6.4 6 L9.6 9.6 L5 7.8 L0.4 9.6 L3.6 6 Z" fill="#6f9fe0"/><circle cx="5" cy="6.4" r="1.5" fill="#e8f0ff"/></svg><span class="a t" style="left:862.2px;top:552.5px;font-size:7.4px;line-height:9.4px;color:#a0a0a0;">地面1</span><svg style="left:915.6px;top:553.1px" width="8" height="8" viewBox="0 0 8 8"><rect x="0.4" y="0.4" width="7.2" height="7.2" rx="1" fill="#8c8c8c"/><path d="M1.6 4.2 L3.2 6 L6.4 1.8" stroke="#5a5a5a" stroke-width="1.1" fill="none"/></svg><div class="a" style="left:926.6px;top:553.9px;width:1.9px;height:1.9px;background:#6a6a6a;border-radius:50%"></div><div class="a" style="left:926.6px;top:558.3000000000001px;width:1.9px;height:1.9px;background:#6a6a6a;border-radius:50%"></div><svg style="left:850.4px;top:565.3px" width="10.6" height="8.5" viewBox="0 0 12 9.6"><path d="M1 0.4 V8.6 H5.6" stroke="#c8c8c8" stroke-width="1.3" fill="none"/><ellipse cx="8.4" cy="3.4" rx="1.9" ry="2.9" fill="none" stroke="#c8c8c8" stroke-width="1.1"/></svg><span class="a t" style="left:863px;top:564.9px;font-size:7.4px;line-height:9.4px;color:#a0a0a0;">口红.1</span><svg style="left:915.6px;top:565.5px" width="8" height="8" viewBox="0 0 8 8"><rect x="0.4" y="0.4" width="7.2" height="7.2" rx="1" fill="#8c8c8c"/><path d="M1.6 4.2 L3.2 6 L6.4 1.8" stroke="#5a5a5a" stroke-width="1.1" fill="none"/></svg><div class="a" style="left:926.6px;top:566.3px;width:1.9px;height:1.9px;background:#6a6a6a;border-radius:50%"></div><div class="a" style="left:926.6px;top:570.7px;width:1.9px;height:1.9px;background:#6a6a6a;border-radius:50%"></div><svg style="left:850.4px;top:577.7px" width="10.6" height="8.5" viewBox="0 0 12 9.6"><path d="M1 0.4 V8.6 H5.6" stroke="#c8c8c8" stroke-width="1.3" fill="none"/><ellipse cx="8.4" cy="3.4" rx="1.9" ry="2.9" fill="none" stroke="#c8c8c8" stroke-width="1.1"/></svg><span class="a t" style="left:863px;top:577.3px;font-size:7.4px;line-height:9.4px;color:#a0a0a0;">口红</span><svg style="left:915.6px;top:577.9000000000001px" width="8" height="8" viewBox="0 0 8 8"><rect x="0.4" y="0.4" width="7.2" height="7.2" rx="1" fill="#8c8c8c"/><path d="M1.6 4.2 L3.2 6 L6.4 1.8" stroke="#5a5a5a" stroke-width="1.1" fill="none"/></svg><div class="a" style="left:926.6px;top:578.7px;width:1.9px;height:1.9px;background:#6a6a6a;border-radius:50%"></div><div class="a" style="left:926.6px;top:583.1000000000001px;width:1.9px;height:1.9px;background:#6a6a6a;border-radius:50%"></div><div class="a" style="left:938.6px;top:476.7px;width:12.6px;height:12px;background:#f07a3a;border:1px solid #f0a030"></div><svg style="left:939.4px;top:477.3px" width="11" height="10.8" viewBox="0 0 11 10.8"><path d="M5.5 0.4 L10.4 2.8 V8 L5.5 10.4 L0.6 8 V2.8 Z" fill="#e8382e"/><path d="M5.5 0.4 L10.4 2.8 L5.5 5.2 L0.6 2.8 Z" fill="#f4685a"/><path d="M5.5 5.2 V10.4" stroke="#a81812" stroke-width="0.7"/></svg><div class="a" style="left:953.2px;top:478.5px;width:3.6px;height:3.6px;background:#d8902a;border-radius:50%"></div><div class="a" style="left:957.8000000000001px;top:483.3px;width:3.6px;height:3.6px;background:#c07a20;border-radius:50%"></div><div class="a" style="left:956.0px;top:481.09999999999997px;width:2px;height:2px;background:#8a5a1a;border-radius:50%"></div><div class="a" style="left:965.1px;top:478.2px;width:9px;height:9px;background:conic-gradient(#f4f4f4 25%,#111 0 50%,#f4f4f4 0 75%,#111 0) 0 0/4.5px 4.5px;outline:0.6px solid #7a6a4a"></div><div class="a" style="left:976.6px;top:477.7px;width:10px;height:10px;background:#fafafa;border-radius:50%"></div><svg style="left:939.6px;top:489.7px" width="10.4" height="10.8" viewBox="0 0 10 10.8"><path d="M5 0.2 L9.6 2.8 V8 L5 10.6 L0.4 8 V2.8 Z" fill="#e8362e"/><path d="M5 3 L7.4 4.4 V7 L5 8.4 L2.6 7 V4.4 Z" fill="#a81410"/></svg><svg style="left:939.6px;top:514.9000000000001px" width="10" height="10" viewBox="0 0 10 10"><circle cx="5" cy="5" r="4.6" fill="#2a62c0"/><circle cx="6.4" cy="6.2" r="3.2" fill="#505a66"/></svg><div class="a" style="left:953.2px;top:515.7px;width:3.6px;height:3.6px;background:#d8902a;border-radius:50%"></div><div class="a" style="left:957.8000000000001px;top:520.5000000000001px;width:3.6px;height:3.6px;background:#c07a20;border-radius:50%"></div><div class="a" style="left:956.0px;top:518.3000000000001px;width:2px;height:2px;background:#8a5a1a;border-radius:50%"></div><div class="a" style="left:965.1px;top:515.4000000000001px;width:9px;height:9px;background:conic-gradient(#f4f4f4 25%,#111 0 50%,#f4f4f4 0 75%,#111 0) 0 0/4.5px 4.5px;outline:0.6px solid #7a6a4a"></div><div class="a" style="left:940.6px;top:528.1px;width:3.6px;height:3.6px;background:#d8902a;border-radius:50%"></div><div class="a" style="left:945.2px;top:532.9000000000001px;width:3.6px;height:3.6px;background:#c07a20;border-radius:50%"></div><div class="a" style="left:943.4px;top:530.7px;width:2px;height:2px;background:#8a5a1a;border-radius:50%"></div><svg style="left:939.6px;top:539.7px" width="10" height="10" viewBox="0 0 10 10"><circle cx="5" cy="5" r="4.6" fill="#2a62c0"/><circle cx="6.4" cy="6.2" r="3.2" fill="#505a66"/></svg><div class="a" style="left:944.4px;top:544.1px;width:4px;height:4.6px;background:#e4e4e4;"></div><svg style="left:952px;top:539.7px" width="10" height="10" viewBox="0 0 10 10"><circle cx="5" cy="5" r="4.6" fill="#2a62c0"/><circle cx="6.4" cy="6.2" r="3.2" fill="#505a66"/></svg><div class="a" style="left:965.2px;top:540.5px;width:3.6px;height:3.6px;background:#d8902a;border-radius:50%"></div><div class="a" style="left:969.8000000000001px;top:545.3000000000001px;width:3.6px;height:3.6px;background:#c07a20;border-radius:50%"></div><div class="a" style="left:968.0px;top:543.1px;width:2px;height:2px;background:#8a5a1a;border-radius:50%"></div><div class="a" style="left:977.5px;top:540.2px;width:9px;height:9px;background:conic-gradient(#f4f4f4 25%,#111 0 50%,#f4f4f4 0 75%,#111 0) 0 0/4.5px 4.5px;outline:0.6px solid #7a6a4a"></div><div class="a" style="left:940.6px;top:552.9px;width:3.6px;height:3.6px;background:#d8902a;border-radius:50%"></div><div class="a" style="left:945.2px;top:557.7px;width:3.6px;height:3.6px;background:#c07a20;border-radius:50%"></div><div class="a" style="left:943.4px;top:555.5px;width:2px;height:2px;background:#8a5a1a;border-radius:50%"></div><div class="a" style="left:952.9px;top:552.6px;width:9px;height:9px;background:conic-gradient(#f4f4f4 25%,#111 0 50%,#f4f4f4 0 75%,#111 0) 0 0/4.5px 4.5px;outline:0.6px solid #7a6a4a"></div><div class="a" style="left:964.8px;top:552.3000000000001px;width:9.6px;height:9.6px;border-radius:50%;background:radial-gradient(circle at 35% 35%,#c8a89a,#7a5a50)"></div><svg style="left:939.6px;top:564.1px" width="11" height="10.8" viewBox="0 0 11 10.8"><path d="M5.5 0.4 L10.4 2.8 V8 L5.5 10.4 L0.6 8 V2.8 Z" fill="#e8382e"/><path d="M5.5 0.4 L10.4 2.8 L5.5 5.2 L0.6 2.8 Z" fill="#f4685a"/><path d="M5.5 5.2 V10.4" stroke="#a81812" stroke-width="0.7"/></svg><svg style="left:939.6px;top:576.5000000000001px" width="11" height="10.8" viewBox="0 0 11 10.8"><path d="M5.5 0.4 L10.4 2.8 V8 L5.5 10.4 L0.6 8 V2.8 Z" fill="#e8382e"/><path d="M5.5 0.4 L10.4 2.8 L5.5 5.2 L0.6 2.8 Z" fill="#f4685a"/><path d="M5.5 5.2 V10.4" stroke="#a81812" stroke-width="0.7"/></svg><div class="a" style="left:1203.5px;top:434.6px;width:15.5px;height:611px;background:#464646;"></div><div class="a" style="left:1203.5px;top:434.6px;width:0.8px;height:611px;background:#585858;"></div><div class="a" style="left:1204.6px;top:435.5px;width:13.6px;height:20.5px;background:#6c6c6c;"></div><span class="a t" style="left:1206.8000000000002px;top:438.6px;font-size:6.6px;line-height:7.2px;color:#f0a02a;text-align:center;width:8px">对<br>象</span><div class="a" style="left:1204.6px;top:456.4px;width:13.6px;height:0.8px;background:#333;"></div><span class="a t" style="left:1206.8000000000002px;top:461px;font-size:6.6px;line-height:7.2px;color:#2c2c2c;text-align:center;width:8px">场<br>次</span><div class="a" style="left:1204.6px;top:479px;width:13.6px;height:0.8px;background:#333;"></div><span class="a t" style="left:1206.8000000000002px;top:483px;font-size:6.6px;line-height:7.2px;color:#2c2c2c;text-align:center;width:8px">内<br>容<br>浏<br>览<br>器</span><div class="a" style="left:1204.6px;top:519.6px;width:13.6px;height:0.8px;background:#333;"></div><span class="a t" style="left:1206.8000000000002px;top:523.6px;font-size:6.6px;line-height:7.2px;color:#2c2c2c;text-align:center;width:8px">构<br>造</span><div class="a" style="left:1204.6px;top:541px;width:13.6px;height:0.8px;background:#333;"></div><div class="a" style="left:1203.8px;top:713px;width:15.4px;height:49.6px;background:#4e4e4e;border:1px solid #9a9a9a"></div><div class="a" style="left:1205px;top:734.6px;width:13px;height:21px;background:#8a8e98;"></div><svg style="left:1206.6px;top:737.5px" width="10" height="14" viewBox="0 0 10 14"><path d="M2 1 H6 L9 4 V6.4 L7 7 L9 8 V11 L6.6 13 H2 V10.4 H5.6 V8.2 H3 V5.8 H5.6 V3.6 H2 Z" fill="#f0a82a"/></svg><div class="a" style="left:1205px;top:763.2px;width:13px;height:4px;background:#353535;"></div><div class="a" style="left:1208px;top:764.2px;width:7px;height:1.6px;background:#5c5c5c;"></div><div class="a" style="left:870px;top:733.2px;width:333.5px;height:0.9px;background:#5a5a5a;"></div><div class="a" style="left:870px;top:749.2px;width:333.5px;height:0.9px;background:#5a5a5a;"></div><span class="a t" style="left:877px;top:737.05px;font-size:6.9px;line-height:8.9px;color:#b2b2b2;">用户数据</span><svg style="left:1115px;top:737.6px" width="10" height="8" viewBox="0 0 10 8"><path d="M0 4 L9.6 0 L7 4 L9.6 8 Z" fill="#1a1a1a"/></svg><div class="a" style="left:1128px;top:741.4px;width:7px;height:0.8px;background:#5a5a5a;"></div><svg style="left:1141.6px;top:737px" width="8.4" height="9" viewBox="0 0 8.4 9"><path d="M4.2 0 L8.4 9 L4.2 7 L0 9 Z" fill="#1a1a1a"/></svg><svg style="left:1158px;top:737.4px" width="8.6" height="8.6" viewBox="0 0 8.6 8.6"><circle cx="3.2" cy="3.2" r="2.4" fill="none" stroke="#2a2a2a" stroke-width="1.4"/><path d="M5 5 L8.2 8.2" stroke="#2a2a2a" stroke-width="1.6"/></svg><svg style="left:1172px;top:737px" width="6.6" height="9" viewBox="0 0 6.6 9"><rect x="0.4" y="4" width="5.8" height="4.8" fill="#333"/><path d="M1.6 4 V2.6 A1.7 1.7 0 0 1 5 2.6 V4" stroke="#333" stroke-width="1" fill="none"/></svg><div class="a" style="left:1183.4px;top:737.4px;width:8.4px;height:8.4px;background:#3c3c3c;border-radius:50%;border:1px solid #2e2e2e"></div><div class="a" style="left:1195px;top:737.2px;width:8px;height:8.6px;background:#2c2c2c;"></div><div class="a" style="left:1196.6px;top:740.8px;width:4.8px;height:1px;background:#8a8a8a;"></div><span class="a t" style="left:871px;top:753.55px;font-size:6.9px;line-height:8.9px;color:#a0a0a0;">色器图解 [地面]</span><div class="a" style="left:870px;top:766px;width:3px;height:9px;background:#8ea8d2;"></div><div class="a" style="left:838px;top:782.4px;width:65.6px;height:74px;background:repeating-linear-gradient(-45deg,#8c8c8c 0 9px,#5a5a5a 9px 18px)"></div><div class="a" style="left:827px;top:784.5px;width:68px;height:69px;border-radius:50%;background:radial-gradient(circle at 38% 34%,#c9a498 0,#a98678 45%,#6e564e 76%,#d8d0cc 91%,#4a3a36 100%)"></div><div class="a" style="left:870px;top:858.6px;width:333px;height:11.4px;background:#343434;"></div><div class="a" style="left:870px;top:873px;width:332px;height:11.4px;background:#6c6c6c;border-radius:4px"></div><span class="a t" style="left:986px;top:874.3px;font-size:6.8px;line-height:8.8px;color:#c4c4c4;">编辑着色器图解...</span><div class="a" style="left:870px;top:888.2px;width:333px;height:11.4px;background:#343434;"></div><div class="a" style="left:870px;top:902.4px;width:333px;height:10.8px;background:#656565;"></div><div class="a" style="left:870px;top:914.8px;width:333px;height:10.8px;background:#656565;"></div><!-- timeline / materials / bottom -->
<div class="a" style="left:53.5px;top:890.2px;width:761px;height:155px;background:#474747;"></div><div class="a" style="left:53.5px;top:892.6px;width:761px;height:13.6px;background:#343434;"></div><div class="a" style="left:53.5px;top:906.2px;width:761px;height:3px;background:repeating-linear-gradient(90deg,#525252 0 1px,#3c3c3c 1px 4.67px)"></div><div class="a" style="left:57.6px;top:893px;width:7.4px;height:11.6px;background:#3fd07c;border:1px solid #1d7a44;border-radius:1px"></div><span class="a t" style="left:64.0px;top:894.2px;font-size:6.8px;line-height:8.8px;color:#a8a8a8;">0</span><div class="a" style="left:66.5px;top:904px;width:0.8px;height:3px;background:#686868;"></div><span class="a t" style="left:104.5px;top:894.2px;font-size:6.8px;line-height:8.8px;color:#a8a8a8;">10</span><div class="a" style="left:113.2px;top:904px;width:0.8px;height:3px;background:#686868;"></div><span class="a t" style="left:151.2px;top:894.2px;font-size:6.8px;line-height:8.8px;color:#a8a8a8;">20</span><div class="a" style="left:159.9px;top:904px;width:0.8px;height:3px;background:#686868;"></div><span class="a t" style="left:197.9px;top:894.2px;font-size:6.8px;line-height:8.8px;color:#a8a8a8;">30</span><div class="a" style="left:206.60000000000002px;top:904px;width:0.8px;height:3px;background:#686868;"></div><span class="a t" style="left:244.60000000000002px;top:894.2px;font-size:6.8px;line-height:8.8px;color:#a8a8a8;">40</span><div class="a" style="left:253.3px;top:904px;width:0.8px;height:3px;background:#686868;"></div><span class="a t" style="left:291.3px;top:894.2px;font-size:6.8px;line-height:8.8px;color:#a8a8a8;">50</span><div class="a" style="left:300.0px;top:904px;width:0.8px;height:3px;background:#686868;"></div><span class="a t" style="left:338.0px;top:894.2px;font-size:6.8px;line-height:8.8px;color:#a8a8a8;">60</span><div class="a" style="left:346.70000000000005px;top:904px;width:0.8px;height:3px;background:#686868;"></div><span class="a t" style="left:384.70000000000005px;top:894.2px;font-size:6.8px;line-height:8.8px;color:#a8a8a8;">70</span><div class="a" style="left:393.40000000000003px;top:904px;width:0.8px;height:3px;background:#686868;"></div><span class="a t" style="left:431.40000000000003px;top:894.2px;font-size:6.8px;line-height:8.8px;color:#a8a8a8;">80</span><div class="a" style="left:440.1px;top:904px;width:0.8px;height:3px;background:#686868;"></div><div class="a" style="left:58px;top:913px;width:40.5px;height:11.4px;background:#353535;border-radius:1px"></div><span class="a t" style="left:61.5px;top:914.5px;font-size:6.6px;line-height:8.6px;color:#a0a0a0;">0 F</span><span class="a t" style="left:93.5px;top:914.8px;font-size:6px;line-height:8px;color:#9a9a9a;">↕</span><div class="a" style="left:103px;top:912.6px;width:350.5px;height:12px;border-radius:3px;background:linear-gradient(#8a8a8a,#6a6a6a)"></div><svg style="left:105.5px;top:916px" width="5" height="5.6" viewBox="0 0 5 5.6"><path d="M5 0 V5.6 L0 2.8 Z" fill="#d8d8d8"/></svg><span class="a t" style="left:112.5px;top:914.6px;font-size:6.4px;line-height:8.4px;color:#8e8e8e;">0 F</span><span class="a t" style="left:427px;top:914.6px;font-size:6.4px;line-height:8.4px;color:#b4b4b4;">150 F</span><svg style="left:445.5px;top:916px" width="5" height="5.6" viewBox="0 0 5 5.6"><path d="M0 0 V5.6 L5 2.8 Z" fill="#e4e4e4"/></svg><div class="a" style="left:457.5px;top:911.4px;width:8px;height:13.4px;background:#1c2e4a;border-radius:3px"></div><div class="a" style="left:53.5px;top:928.6px;width:409px;height:0.8px;background:#3e3e3e;"></div><div class="a" style="left:53.5px;top:945px;width:409px;height:0.8px;background:#414141;"></div><div class="a" style="left:57px;top:933.5px;width:6px;height:7px;background:repeating-linear-gradient(0deg,#606060 0 1px,transparent 1px 2.3px)"></div><span class="a t" style="left:69px;top:932.75px;font-size:6.9px;line-height:8.9px;color:#a6a6a6;">创建</span><span class="a t" style="left:91.4px;top:932.75px;font-size:6.9px;line-height:8.9px;color:#a6a6a6;">编辑</span><span class="a t" style="left:113.6px;top:932.75px;font-size:6.9px;line-height:8.9px;color:#a6a6a6;">功能</span><span class="a t" style="left:136px;top:932.75px;font-size:6.9px;line-height:8.9px;color:#a6a6a6;">纹理</span><div class="a" style="left:54px;top:946px;width:27px;height:29px;background:#585858"></div><div class="a" style="left:55.6px;top:947.6px;width:24px;height:24.6px;border-radius:50%;background:radial-gradient(circle at 45% 42%,#fff 0,#fff 62%,#e8e8e8 100%);"></div><div class="a" style="left:54px;top:975px;width:27px;height:9.6px;background:#686868;"></div><span class="a t" style="left:55.4px;top:975.45px;font-size:6.7px;line-height:8.7px;color:#c4c4c4;width:25px;overflow:hidden;text-decoration:underline;text-decoration-color:#8a8a8a;">RS Incar</span><div class="a" style="left:84.5px;top:946px;width:27px;height:29px;background:repeating-linear-gradient(-45deg,#8a8a8a 0 3.4px,#5c5c5c 3.4px 6.8px)"></div><div class="a" style="left:86.1px;top:947.6px;width:24px;height:24.6px;border-radius:50%;background:radial-gradient(circle at 36% 36%,#ff8a6a 0,#e0321c 22%,#c0200e 60%,#6a0c04 100%);"></div><div class="a" style="left:84.5px;top:975px;width:27px;height:9.6px;background:#686868;"></div><span class="a t" style="left:85.9px;top:975.45px;font-size:6.7px;line-height:8.7px;color:#c4c4c4;width:25px;overflow:hidden;text-decoration:underline;text-decoration-color:#8a8a8a;">RS Mate</span><div class="a" style="left:115px;top:946px;width:27px;height:29px;background:repeating-linear-gradient(-45deg,#8a8a8a 0 3.4px,#5c5c5c 3.4px 6.8px)"></div><div class="a" style="left:116.6px;top:947.6px;width:24px;height:24.6px;border-radius:50%;background:radial-gradient(circle at 40% 38%,#d83a26 0,#b8200e 50%,#5a0a04 100%);"></div><div class="a" style="left:115px;top:975px;width:27px;height:9.6px;background:#686868;"></div><span class="a t" style="left:116.4px;top:975.45px;font-size:6.7px;line-height:8.7px;color:#c4c4c4;width:25px;overflow:hidden;text-decoration:underline;text-decoration-color:#8a8a8a;">RS Mate</span><div class="a" style="left:145px;top:946px;width:27px;height:29px;background:repeating-linear-gradient(-45deg,#8a8a8a 0 3.4px,#5c5c5c 3.4px 6.8px)"></div><div class="a" style="left:146.6px;top:947.6px;width:24px;height:24.6px;border-radius:50%;background:radial-gradient(circle at 36% 38%,#f8e8b0 0,#5a4a20 8%,#0a0a0a 26%,#000 100%);"></div><div class="a" style="left:145px;top:975px;width:27px;height:9.6px;background:#686868;"></div><span class="a t" style="left:146.4px;top:975.45px;font-size:6.7px;line-height:8.7px;color:#c4c4c4;width:25px;overflow:hidden;text-decoration:underline;text-decoration-color:#8a8a8a;">RS Mate</span><div class="a" style="left:176px;top:946px;width:27px;height:29px;background:repeating-linear-gradient(-45deg,#8a8a8a 0 3.4px,#5c5c5c 3.4px 6.8px)"></div><div class="a" style="left:177.6px;top:947.6px;width:24px;height:24.6px;border-radius:50%;background:repeating-linear-gradient(-45deg,rgba(150,150,150,.9) 0 3.4px,rgba(96,96,96,.9) 3.4px 6.8px);border:1px solid #4a4a4a;"></div><div class="a" style="left:176px;top:975px;width:27px;height:9.6px;background:#686868;"></div><span class="a t" style="left:177.4px;top:975.45px;font-size:6.7px;line-height:8.7px;color:#c4c4c4;width:25px;overflow:hidden;text-decoration:underline;text-decoration-color:#8a8a8a;">水面</span><div class="a" style="left:206px;top:946px;width:27px;height:29px;background:#585858"></div><div class="a" style="left:207.6px;top:947.6px;width:24px;height:24.6px;border-radius:50%;background:radial-gradient(circle at 42% 36%,#a08c84 0,#8a7870 45%,#5e4e48 100%);"></div><div class="a" style="left:206px;top:975px;width:27px;height:9.6px;background:#f5a623;"></div><span class="a t" style="left:207.4px;top:975.45px;font-size:6.7px;line-height:8.7px;color:#4a2a00;width:25px;overflow:hidden;font-weight:bold;">地面</span><div class="a" style="left:236.5px;top:946px;width:27px;height:29px;background:repeating-linear-gradient(-45deg,#8a8a8a 0 3.4px,#5c5c5c 3.4px 6.8px)"></div><div class="a" style="left:238.1px;top:947.6px;width:24px;height:24.6px;border-radius:50%;background:radial-gradient(circle at 36% 38%,#f8e8b0 0,#5a4a20 8%,#0a0a0a 26%,#000 100%);"></div><div class="a" style="left:236.5px;top:975px;width:27px;height:9.6px;background:#686868;"></div><span class="a t" style="left:237.9px;top:975.45px;font-size:6.7px;line-height:8.7px;color:#c4c4c4;width:25px;overflow:hidden;text-decoration:underline;text-decoration-color:#8a8a8a;">RS Mate</span><div class="a" style="left:54px;top:946px;width:27px;height:38.6px;border:1px solid #b8923c"></div><div class="a" style="left:463px;top:997px;width:351px;height:48px;background:#474747;"></div><div class="a" style="left:627px;top:997.6px;width:1px;height:37px;background:#3a3a3a;"></div><div class="a" style="left:628px;top:997.6px;width:1px;height:37px;background:#525252;"></div><div class="a" style="left:637px;top:998px;width:50px;height:2px;background:#61748a;"></div><div class="a" style="left:698px;top:998px;width:50px;height:2px;background:#61748a;"></div><div class="a" style="left:761px;top:998px;width:48.5px;height:2px;background:#61748a;"></div><div class="a" style="left:28px;top:1033.2px;width:786px;height:1px;background:#3a3a3a;"></div><div class="a" style="left:28px;top:1034.4px;width:786px;height:1px;background:#545454;"></div><div class="a" style="left:28px;top:1035.4px;width:786px;height:9.4px;background:#464646;"></div><div class="a" style="left:814px;top:1033px;width:1.6px;height:12px;background:#3a3a3a;"></div><div class="a" style="left:30px;top:1037.6px;width:8px;height:5px;background:repeating-linear-gradient(0deg,#5c5c5c 0 1px,transparent 1px 2px)"></div><div class="a" style="left:28px;top:1044.6px;width:1191px;height:26.6px;background:#e9f563;"></div><div class="a" style="left:28px;top:1070.4px;width:1191px;height:1.4px;background:#c4cfb0;"></div><div class="a" style="left:75px;top:1070.2px;width:30px;height:1.6px;background:#8a9a6a;opacity:.7"></div><div class="a" style="left:170px;top:1070.2px;width:6px;height:1.6px;background:#8a9a6a;opacity:.7"></div><div class="a" style="left:195px;top:1070.2px;width:4px;height:1.6px;background:#8a9a6a;opacity:.7"></div><div class="a" style="left:335px;top:1070.2px;width:10px;height:1.6px;background:#8a9a6a;opacity:.7"></div><div class="a" style="left:380px;top:1070.2px;width:24px;height:1.6px;background:#8a9a6a;opacity:.7"></div><div class="a" style="left:420px;top:1070.2px;width:6px;height:1.6px;background:#8a9a6a;opacity:.7"></div><div class="a" style="left:560px;top:1070.2px;width:6px;height:1.6px;background:#8a9a6a;opacity:.7"></div><div class="a" style="left:610px;top:1070.2px;width:8px;height:1.6px;background:#8a9a6a;opacity:.7"></div><div class="a" style="left:690px;top:1070.2px;width:6px;height:1.6px;background:#8a9a6a;opacity:.7"></div><div class="a" style="left:770px;top:1070.2px;width:40px;height:1.6px;background:#8a9a6a;opacity:.7"></div><div class="a" style="left:1000px;top:1070.2px;width:10px;height:1.6px;background:#8a9a6a;opacity:.7"></div><div class="a" style="left:1030px;top:1070.2px;width:12px;height:1.6px;background:#8a9a6a;opacity:.7"></div><span class="a t" style="left:27px;top:1056px;font-size:18px;line-height:20px;font-weight:bold;color:#fff;-webkit-text-stroke:1.2px #c8862a;letter-spacing:1px">0 ?</span><span class="a t" style="left:1114.5px;top:421.5px;font-size:30px;line-height:36px;color:#e0e0e0;opacity:.93;letter-spacing:0.5px;transform:scaleX(1.07);transform-origin:0 0">课堂</span><div class="a" style="left:926.8px;top:1024.2px;width:133.4px;height:16.6px;background:#fafcff;border:1px solid #d4dcec;border-radius:1px"></div><div class="a" style="left:929.5px;top:1026px;width:12px;height:12px;background:#2a66d0;border-radius:50%"></div><div class="a" style="left:932.6px;top:1028.4px;width:5.8px;height:6.6px;background:#fff;border-radius:50% 50% 40% 40%"></div><span class="a t" style="left:943.6px;top:1026.45px;font-size:9.5px;line-height:11.5px;color:#2a66d0;font-weight:bold">英</span><div class="a" style="left:959px;top:1029px;width:2px;height:2px;background:#b8c4d8;border-radius:50%"></div><div class="a" style="left:962.6px;top:1032.6px;width:2px;height:3.6px;background:#b8c4d8;border-radius:50%"></div><div class="a" style="left:973.4px;top:1027.2px;width:9.6px;height:9.6px;border:1.5px solid #2a66d0;border-radius:50%"></div><div class="a" style="left:976.6px;top:1030.4px;width:3.4px;height:1.2px;background:#2a66d0;"></div><div class="a" style="left:976.6px;top:1033px;width:4px;height:1.2px;background:#2a66d0;"></div><svg style="left:988.4px;top:1027.4px" width="10" height="10" viewBox="0 0 10 10"><path d="M1 1 L9 8 M9 1 L1 8" stroke="#2a66d0" stroke-width="1.7"/><circle cx="1.8" cy="8.2" r="1.5" fill="#2a66d0"/><circle cx="8.2" cy="8.2" r="1.5" fill="#2a66d0"/></svg><div class="a" style="left:1002.6px;top:1027.8px;width:11.4px;height:8.4px;border:1.4px solid #2a66d0;border-radius:1px"></div><div class="a" style="left:1005px;top:1030.2px;width:6.6px;height:1px;background:#2a66d0;"></div><div class="a" style="left:1005px;top:1032.4px;width:6.6px;height:1px;background:#2a66d0;"></div><div class="a" style="left:1019.6px;top:1027.2px;width:4.4px;height:4.4px;background:#c4cedf;border-radius:50%"></div><div class="a" style="left:1018.2px;top:1032px;width:7.2px;height:5px;background:#c4cedf;border-radius:3px 3px 0 0"></div><svg style="left:1030.4px;top:1027.6px" width="11" height="9.6" viewBox="0 0 11 9.6"><path d="M0.4 2 L3.4 0.4 Q5.5 2 7.6 0.4 L10.6 2 L9.4 4.4 L8.2 3.8 V9.2 H2.8 V3.8 L1.6 4.4 Z" fill="#2a66d0"/></svg><svg style="left:1046px;top:1027.2px" width="10.4" height="10.4" viewBox="0 0 10.4 10.4"><path d="M5.2 0.4 L6.4 1.8 L8.2 1.4 L8.6 3.2 L10.2 4 L9.4 5.6 L10 7.4 L8.2 7.8 L7.4 9.6 L5.6 8.8 L3.8 10 L3 8.2 L1.2 7.8 L1.6 6 L0.4 4.6 L1.8 3.4 L1.8 1.6 L3.6 1.8 Z" fill="#2a66d0"/><circle cx="5.2" cy="5.2" r="1.8" fill="#fafcff"/></svg><!-- material editor window -->
<div class="a" style="left:462.6px;top:594.4px;width:407px;height:403.4px;background:#4a4a4a;border:1px solid #3d6f9e"></div><div class="a" style="left:463.6px;top:595.2px;width:405.2px;height:18px;background:#fcfcfc;"></div><svg style="left:469px;top:599px" width="9.6" height="9.6" viewBox="0 0 10 10"><circle cx="5" cy="5" r="4.6" fill="#1e2452"/><path d="M2 5.6 C3 3 6 2.4 8.4 3.6 C6 3.6 4.6 4.8 4.6 6.6 Z" fill="#8f9ad0"/></svg><span class="a t" style="left:482px;top:599.3px;font-size:7.4px;line-height:9.4px;color:#3a3a3a;">材质编辑器</span><div class="a" style="left:795px;top:603.6px;width:7px;height:1.1px;background:#333;"></div><div class="a" style="left:823px;top:600px;width:7px;height:7px;border:1.1px solid #333"></div><svg style="left:851px;top:600px" width="7.4" height="7.4" viewBox="0 0 7.4 7.4"><path d="M0.4 0.4 L7 7 M7 0.4 L0.4 7" stroke="#333" stroke-width="1.1"/></svg><div class="a" style="left:463.6px;top:613.2px;width:405.2px;height:12px;background:#5c5c5c;"></div><div class="a" style="left:466px;top:616.2px;width:6.4px;height:6.8px;background:#7e7e7e;-webkit-mask:repeating-linear-gradient(0deg,#000 0 0.9px,transparent 0.9px 2px),repeating-linear-gradient(90deg,#000 0 0.9px,transparent 0.9px 2px);-webkit-mask-composite:source-in;mask-composite:intersect"></div><svg style="left:806.5px;top:615.4px" width="10" height="8" viewBox="0 0 10 8"><path d="M0 4 L9.6 0 L7 4 L9.6 8 Z" fill="#141414"/></svg><svg style="left:849px;top:614.4px" width="6.6" height="9" viewBox="0 0 6.6 9"><rect x="0.4" y="4" width="5.8" height="4.8" fill="none" stroke="#2a2a2a" stroke-width="1"/><path d="M1.6 4 V2.6 A1.7 1.7 0 0 1 5 2.6 V4" stroke="#2a2a2a" stroke-width="1" fill="none"/></svg><div class="a" style="left:859px;top:615px;width:7.6px;height:8.6px;background:#2a2a2a;"></div><div class="a" style="left:860.6px;top:618.8px;width:4.4px;height:1px;background:#999;"></div><div class="a" style="left:862.3px;top:617px;width:1px;height:4.6px;background:#999;"></div><div class="a" style="left:463.6px;top:625.2px;width:80.6px;height:371.6px;background:#494949;"></div><div class="a" style="left:464.6px;top:627px;width:73.6px;height:75px;background:repeating-linear-gradient(-45deg,#8a8a8a 0 9.5px,#585858 9.5px 19px);overflow:hidden"></div><div class="a" style="left:468.8px;top:630.8px;width:64px;height:64px;border-radius:50%;background:radial-gradient(circle at 38% 32%,#caa396 0,#b68e80 38%,#9c786c 62%,#7a5c52 84%,#6a5048 100%);box-shadow:inset -3px -3px 2.5px -1.5px rgba(238,232,228,.9),inset -9px -9px 7px -4px rgba(50,34,30,.75)"></div><div class="a" style="left:464.6px;top:705.4px;width:73.6px;height:10.8px;background:#383838;"></div><span class="a t" style="left:466px;top:706.5px;font-size:6.6px;line-height:8.6px;color:#9a9a9a;">地面</span><div class="a" style="left:464.6px;top:720px;width:54px;height:10.8px;background:#383838;"></div><div class="a" style="left:519.6px;top:720px;width:6.6px;height:10.8px;background:#6a6a6a;"></div><svg style="left:521.2px;top:724.4px" width="3.4" height="2.4" viewBox="0 0 3.4 2.4"><path d="M0 0 H3.4 L1.7 2.4 Z" fill="#ddd"/></svg><div class="a" style="left:527.4px;top:720px;width:11px;height:11px;background:#f0f0f0;border-radius:50%"></div><svg style="left:529.4px;top:722px" width="7" height="7" viewBox="0 0 7 7"><path d="M0.6 0.6 L6 3 L3.6 3.8 L6.4 6.4 L3.8 3.6 L3 6 Z" fill="#111" stroke="#111" stroke-width="0.8"/></svg><span class="a t" style="left:475.6px;top:735.1px;font-size:7px;line-height:9px;color:#f0a02a;font-weight:bold">主体</span><span class="a t" style="left:475.6px;top:747.5px;font-size:7px;line-height:9px;color:#a0a0a0;">指定</span><div class="a" style="left:543.4px;top:625.2px;width:1.6px;height:371.6px;background:#3e3e3e;"></div><div class="a" style="left:545px;top:625.2px;width:316px;height:371.6px;background:#5a5a5a;"></div><div class="a" style="left:546px;top:629.8px;width:314px;height:11.8px;background:#333;"></div><span class="a t" style="left:548px;top:631.4px;font-size:6.8px;line-height:8.8px;color:#aaa;">材质属性</span><div class="a" style="left:555px;top:644.8px;width:305.4px;height:10.8px;background:#787878;border-radius:4px"></div><span class="a t" style="left:678px;top:645.8px;font-size:6.8px;line-height:8.8px;color:#cfcfcf;">编辑着色器图解...</span><div class="a" style="left:546px;top:660.4px;width:314px;height:11.4px;background:#333;"></div><span class="a t" style="left:548px;top:661.8px;font-size:6.8px;line-height:8.8px;color:#aaa;">节点</span><div class="a" style="left:546px;top:673.8px;width:316px;height:10.6px;background:#6d6d6d;"></div><span class="a t" style="left:551px;top:674.8px;font-size:6.8px;line-height:8.8px;color:#c4c4c4;">▸ 输出</span><div class="a" style="left:546px;top:685px;width:316px;height:0.9px;background:#4a4a4a;"></div><div class="a" style="left:546px;top:686.2px;width:316px;height:11px;background:#6d6d6d;"></div><span class="a t" style="left:550px;top:687.4px;font-size:6.8px;line-height:8.8px;color:#c4c4c4;">▾ RS Material</span><div class="a" style="left:551px;top:698.2px;width:310px;height:298.6px;background:#575757;border-left:1px solid #4a4a4a"></div><div class="a" style="left:553.8px;top:701px;width:35.2px;height:11.2px;background:#707070;"></div><span class="a t" style="left:553.8px;top:702.2px;width:35.2px;text-align:center;font-size:6.7px;line-height:9px;color:#c0c0c0;">基本</span><div class="a" style="left:590px;top:701px;width:35.2px;height:11.2px;background:#8ea8d2;"></div><span class="a t" style="left:590px;top:702.2px;width:35.2px;text-align:center;font-size:6.7px;line-height:9px;color:#0c1a3a;font-weight:bold;">基本属性</span><div class="a" style="left:626.6px;top:701px;width:35.2px;height:11.2px;background:#707070;"></div><span class="a t" style="left:626.6px;top:702.2px;width:35.2px;text-align:center;font-size:6.7px;line-height:9px;color:#c0c0c0;">Multi-SSS</span><div class="a" style="left:663.4px;top:701px;width:35.2px;height:11.2px;background:#707070;"></div><span class="a t" style="left:663.4px;top:702.2px;width:35.2px;text-align:center;font-size:6.7px;line-height:9px;color:#c0c0c0;">涂层</span><div class="a" style="left:699.8px;top:701px;width:35.2px;height:11.2px;background:#707070;"></div><span class="a t" style="left:699.8px;top:702.2px;width:35.2px;text-align:center;font-size:6.7px;line-height:9px;color:#c0c0c0;">整体</span><div class="a" style="left:736.2px;top:701px;width:35.2px;height:11.2px;background:#707070;"></div><span class="a t" style="left:736.2px;top:702.2px;width:35.2px;text-align:center;font-size:6.7px;line-height:9px;color:#c0c0c0;">优化</span><div class="a" style="left:772.6px;top:701px;width:35.2px;height:11.2px;background:#707070;"></div><span class="a t" style="left:772.6px;top:702.2px;width:35.2px;text-align:center;font-size:6.7px;line-height:9px;color:#c0c0c0;">高级</span><div class="a" style="left:556px;top:715.6px;width:293px;height:11px;background:#333;"></div><span class="a t" style="left:558px;top:716.8px;font-size:6.8px;line-height:8.8px;color:#aaa;">基本属性</span><div class="a" style="left:559.0px;top:731.4px;width:6.8px;height:6.8px;border:1px solid #9a9a9a;border-radius:50%"></div><div class="a" style="left:561.1999999999999px;top:733.5999999999999px;width:2.4px;height:2.4px;background:#8a8a8a;border-radius:50%"></div><span class="a t" style="left:569px;top:730.6px;font-size:6.8px;line-height:8.8px;color:#b4b4b4;">预置</span><div class="a" style="left:585.6px;top:729.4px;width:89.0px;height:10.8px;background:#787878;border-radius:1.5px"></div><span class="a t" style="left:589.0px;top:730.6px;font-size:6.8px;line-height:8.8px;color:#d8d8d8;">自定义</span><svg style="left:667.2px;top:733.4px" width="5" height="3" viewBox="0 0 5 3"><path d="M0 0 H5 L2.5 3 Z" fill="#e8e8e8"/></svg><div class="a" style="left:557px;top:743.8px;width:292px;height:11px;background:#6c6c6c;"></div><span class="a t" style="left:560.5px;top:745.0px;font-size:6.8px;line-height:8.8px;color:#c8c8c8;">▾ 漫射</span><div class="a" style="left:562.6px;top:759.6px;width:6.8px;height:6.8px;border:1px solid #9a9a9a;border-radius:50%"></div><div class="a" style="left:564.8px;top:761.8px;width:2.4px;height:2.4px;background:#8a8a8a;border-radius:50%"></div><span class="a t" style="left:573.6px;top:758.6px;font-size:6.8px;line-height:8.8px;color:#b4b4b4;">颜色</span><svg style="left:592.4px;top:761.4px" width="3" height="3.6" viewBox="0 0 3 3.6"><path d="M0 0 L3 1.8 L0 3.6 Z" fill="#111"/></svg><div class="a" style="left:598.8px;top:757.2px;width:17.4px;height:10.6px;background:#e2a08e;"></div><div class="a" style="left:562.6px;top:773.6px;width:6.8px;height:6.8px;border:1px solid #9a9a9a;border-radius:50%"></div><div class="a" style="left:564.8px;top:775.8px;width:2.4px;height:2.4px;background:#8a8a8a;border-radius:50%"></div><span class="a t" style="left:573.6px;top:772.6px;font-size:6.8px;line-height:8.8px;color:#b4b4b4;">强度</span><div class="a" style="left:588px;top:779.4px;width:10px;height:1px;background:repeating-linear-gradient(90deg,#777 0 1px,transparent 1px 3px)"></div><div class="a" style="left:598.8px;top:771.4px;width:40.8px;height:11.2px;background:#303030;"></div><span class="a t" style="left:602.1999999999999px;top:772.8px;font-size:6.8px;line-height:8.8px;color:#a8a8a8;">1</span><span class="a t" style="left:634.5999999999999px;top:773.4px;font-size:5.6px;line-height:7.6px;color:#9a9a9a;">↕</span><div class="a" style="left:639.6px;top:771.8px;width:203.39999999999998px;height:10.4px;background:#303030;"></div><div class="a" style="left:639.6px;top:771.8px;width:202.39999999999998px;height:10.4px;background:#8c8c8c;"></div><div class="a" style="left:841.8px;top:771.4px;width:1.6px;height:11.2px;background:#f0a020;"></div><div class="a" style="left:562.6px;top:787.4px;width:6.8px;height:6.8px;border:1px solid #9a9a9a;border-radius:50%"></div><div class="a" style="left:564.8px;top:789.5999999999999px;width:2.4px;height:2.4px;background:#8a8a8a;border-radius:50%"></div><span class="a t" style="left:573.6px;top:786.4px;font-size:6.8px;line-height:8.8px;color:#b4b4b4;">粗糙度</span><div class="a" style="left:598.8px;top:785.1999999999999px;width:40.8px;height:11.2px;background:#303030;"></div><span class="a t" style="left:602.1999999999999px;top:786.6px;font-size:6.8px;line-height:8.8px;color:#a8a8a8;">0</span><span class="a t" style="left:634.5999999999999px;top:787.2px;font-size:5.6px;line-height:7.6px;color:#9a9a9a;">↕</span><div class="a" style="left:639.6px;top:785.5999999999999px;width:203.39999999999998px;height:10.4px;background:#303030;"></div><div class="a" style="left:639.4px;top:785.1999999999999px;width:1.6px;height:11.2px;background:#f0a020;"></div><div class="a" style="left:562px;top:800px;width:287px;height:10.8px;background:#6c6c6c;"></div><span class="a t" style="left:568px;top:801.1px;font-size:6.8px;line-height:8.8px;color:#c8c8c8;">▾ 背光/透明</span><div class="a" style="left:568.0px;top:815.2px;width:6.8px;height:6.8px;border:1px solid #9a9a9a;border-radius:50%"></div><div class="a" style="left:570.1999999999999px;top:817.4px;width:2.4px;height:2.4px;background:#8a8a8a;border-radius:50%"></div><span class="a t" style="left:578.6px;top:814.2px;font-size:6.8px;line-height:8.8px;color:#b4b4b4;">颜色</span><svg style="left:597.6px;top:817px" width="3" height="3.6" viewBox="0 0 3 3.6"><path d="M0 0 L3 1.8 L0 3.6 Z" fill="#111"/></svg><div class="a" style="left:603.8px;top:813.2px;width:17.4px;height:10.6px;background:#8c8c8c;"></div><div class="a" style="left:568.0px;top:829.2px;width:6.8px;height:6.8px;border:1px solid #9a9a9a;border-radius:50%"></div><div class="a" style="left:570.1999999999999px;top:831.4px;width:2.4px;height:2.4px;background:#8a8a8a;border-radius:50%"></div><span class="a t" style="left:578.6px;top:828.2px;font-size:6.8px;line-height:8.8px;color:#b4b4b4;">强度</span><div class="a" style="left:593px;top:835.0px;width:10px;height:1px;background:repeating-linear-gradient(90deg,#777 0 1px,transparent 1px 3px)"></div><div class="a" style="left:603.8px;top:827.0px;width:40px;height:11.2px;background:#303030;"></div><span class="a t" style="left:607.1999999999999px;top:828.4px;font-size:6.8px;line-height:8.8px;color:#a8a8a8;">0</span><span class="a t" style="left:638.8px;top:829.0px;font-size:5.6px;line-height:7.6px;color:#9a9a9a;">↕</span><div class="a" style="left:643.8px;top:827.4px;width:194.20000000000005px;height:10.4px;background:#303030;"></div><div class="a" style="left:643.5999999999999px;top:827.0px;width:1.6px;height:11.2px;background:#f0a020;"></div><div class="a" style="left:557px;top:846px;width:292px;height:11px;background:#6c6c6c;"></div><span class="a t" style="left:560.5px;top:847.2px;font-size:6.8px;line-height:8.8px;color:#c8c8c8;">▾ 反射</span><div class="a" style="left:562.6px;top:861.2px;width:6.8px;height:6.8px;border:1px solid #9a9a9a;border-radius:50%"></div><div class="a" style="left:564.8px;top:863.4px;width:2.4px;height:2.4px;background:#8a8a8a;border-radius:50%"></div><span class="a t" style="left:573.6px;top:860.2px;font-size:6.8px;line-height:8.8px;color:#b4b4b4;">颜色</span><div class="a" style="left:589px;top:867.0px;width:19px;height:1px;background:repeating-linear-gradient(90deg,#777 0 1px,transparent 1px 3px)"></div><svg style="left:609.4px;top:863px" width="3" height="3.6" viewBox="0 0 3 3.6"><path d="M0 0 L3 1.8 L0 3.6 Z" fill="#111"/></svg><div class="a" style="left:615.2px;top:859px;width:17.8px;height:10.8px;background:#fdfdfd;"></div><div class="a" style="left:562.6px;top:875.0px;width:6.8px;height:6.8px;border:1px solid #9a9a9a;border-radius:50%"></div><div class="a" style="left:564.8px;top:877.1999999999999px;width:2.4px;height:2.4px;background:#8a8a8a;border-radius:50%"></div><span class="a t" style="left:573.6px;top:874.0px;font-size:6.8px;line-height:8.8px;color:#b4b4b4;">强度</span><div class="a" style="left:589.6px;top:880.8px;width:23.399999999999977px;height:1px;background:repeating-linear-gradient(90deg,#777 0 1px,transparent 1px 3px)"></div><div class="a" style="left:615.6px;top:872.8px;width:40.6px;height:11.2px;background:#303030;"></div><span class="a t" style="left:619.0px;top:874.2px;font-size:6.8px;line-height:8.8px;color:#a8a8a8;">0.105</span><span class="a t" style="left:651.2px;top:874.8px;font-size:5.6px;line-height:7.6px;color:#9a9a9a;">↕</span><div class="a" style="left:656.2px;top:873.1999999999999px;width:186.79999999999995px;height:10.4px;background:#303030;"></div><div class="a" style="left:656.2px;top:873.1999999999999px;width:19.799999999999955px;height:10.4px;background:#8c8c8c;"></div><div class="a" style="left:675.8px;top:872.8px;width:1.6px;height:11.2px;background:#f0a020;"></div><div class="a" style="left:562.6px;top:889.2px;width:6.8px;height:6.8px;border:1px solid #9a9a9a;border-radius:50%"></div><div class="a" style="left:564.8px;top:891.4px;width:2.4px;height:2.4px;background:#8a8a8a;border-radius:50%"></div><span class="a t" style="left:573.6px;top:888.2px;font-size:6.8px;line-height:8.8px;color:#b4b4b4;">粗糙度</span><div class="a" style="left:596.6px;top:895.0px;width:16.399999999999977px;height:1px;background:repeating-linear-gradient(90deg,#777 0 1px,transparent 1px 3px)"></div><div class="a" style="left:615.6px;top:887.0px;width:40.6px;height:11.2px;background:#303030;"></div><span class="a t" style="left:619.0px;top:888.4px;font-size:6.8px;line-height:8.8px;color:#a8a8a8;">0.517</span><span class="a t" style="left:651.2px;top:889.0px;font-size:5.6px;line-height:7.6px;color:#9a9a9a;">↕</span><div class="a" style="left:656.2px;top:887.4px;width:186.79999999999995px;height:10.4px;background:#303030;"></div><div class="a" style="left:656.2px;top:887.4px;width:97.39999999999998px;height:10.4px;background:#8c8c8c;"></div><div class="a" style="left:753.4px;top:887.0px;width:1.6px;height:11.2px;background:#f0a020;"></div><div class="a" style="left:562.6px;top:903.4px;width:6.8px;height:6.8px;border:1px solid #9a9a9a;border-radius:50%"></div><div class="a" style="left:564.8px;top:905.5999999999999px;width:2.4px;height:2.4px;background:#8a8a8a;border-radius:50%"></div><span class="a t" style="left:573.6px;top:902.4px;font-size:6.8px;line-height:8.8px;color:#b4b4b4;">采样</span><div class="a" style="left:589.6px;top:909.1999999999999px;width:23.399999999999977px;height:1px;background:repeating-linear-gradient(90deg,#777 0 1px,transparent 1px 3px)"></div><div class="a" style="left:615.6px;top:901.1999999999999px;width:40.6px;height:11.2px;background:#303030;"></div><span class="a t" style="left:619.0px;top:902.6px;font-size:6.8px;line-height:8.8px;color:#a8a8a8;">16</span><span class="a t" style="left:651.2px;top:903.2px;font-size:5.6px;line-height:7.6px;color:#9a9a9a;">↕</span><div class="a" style="left:656.2px;top:901.5999999999999px;width:186.79999999999995px;height:10.4px;background:#303030;"></div><div class="a" style="left:656.2px;top:901.5999999999999px;width:6.399999999999977px;height:10.4px;background:#8c8c8c;"></div><div class="a" style="left:662.4px;top:901.1999999999999px;width:1.6px;height:11.2px;background:#f0a020;"></div><div class="a" style="left:562.6px;top:917.6px;width:6.8px;height:6.8px;border:1px solid #9a9a9a;border-radius:50%"></div><div class="a" style="left:564.8px;top:919.8px;width:2.4px;height:2.4px;background:#8a8a8a;border-radius:50%"></div><span class="a t" style="left:573.6px;top:916.6px;font-size:6.8px;line-height:8.8px;color:#b4b4b4;">BRDF</span><div class="a" style="left:594px;top:923.4px;width:19px;height:1px;background:repeating-linear-gradient(90deg,#777 0 1px,transparent 1px 3px)"></div><div class="a" style="left:616.2px;top:915.6px;width:226.79999999999995px;height:10.8px;background:#787878;border-radius:1.5px"></div><span class="a t" style="left:619.6px;top:916.8px;font-size:6.8px;line-height:8.8px;color:#d8d8d8;">Beckmann (Cook-Torrance)</span><svg style="left:835.6px;top:919.6px" width="5" height="3" viewBox="0 0 5 3"><path d="M0 0 H5 L2.5 3 Z" fill="#e8e8e8"/></svg><div class="a" style="left:562.6px;top:931.4px;width:6.8px;height:6.8px;border:1px solid #9a9a9a;border-radius:50%"></div><div class="a" style="left:564.8px;top:933.5999999999999px;width:2.4px;height:2.4px;background:#8a8a8a;border-radius:50%"></div><span class="a t" style="left:573.6px;top:930.4px;font-size:6.8px;line-height:8.8px;color:#b4b4b4;">各向异性</span><div class="a" style="left:603.6px;top:937.1999999999999px;width:9.399999999999977px;height:1px;background:repeating-linear-gradient(90deg,#777 0 1px,transparent 1px 3px)"></div><div class="a" style="left:615.6px;top:929.1999999999999px;width:40.6px;height:11.2px;background:#303030;"></div><span class="a t" style="left:619.0px;top:930.6px;font-size:6.8px;line-height:8.8px;color:#a8a8a8;">0</span><span class="a t" style="left:651.2px;top:931.2px;font-size:5.6px;line-height:7.6px;color:#9a9a9a;">↕</span><div class="a" style="left:656.2px;top:929.5999999999999px;width:186.79999999999995px;height:10.4px;background:#303030;"></div><div class="a" style="left:656.2px;top:929.5999999999999px;width:94.79999999999995px;height:10.4px;background:#8c8c8c;"></div><div class="a" style="left:750.8px;top:929.1999999999999px;width:1.6px;height:11.2px;background:#f0a020;"></div><div class="a" style="left:562.6px;top:945.4px;width:6.8px;height:6.8px;border:1px solid #9a9a9a;border-radius:50%"></div><div class="a" style="left:564.8px;top:947.5999999999999px;width:2.4px;height:2.4px;background:#8a8a8a;border-radius:50%"></div><span class="a t" style="left:573.6px;top:944.4px;font-size:6.8px;line-height:8.8px;color:#b4b4b4;">旋转</span><div class="a" style="left:589.6px;top:951.1999999999999px;width:23.399999999999977px;height:1px;background:repeating-linear-gradient(90deg,#777 0 1px,transparent 1px 3px)"></div><div class="a" style="left:615.6px;top:943.1999999999999px;width:40.6px;height:11.2px;background:#303030;"></div><span class="a t" style="left:619.0px;top:944.6px;font-size:6.8px;line-height:8.8px;color:#a8a8a8;">0</span><span class="a t" style="left:651.2px;top:945.2px;font-size:5.6px;line-height:7.6px;color:#9a9a9a;">↕</span><div class="a" style="left:656.2px;top:943.5999999999999px;width:186.79999999999995px;height:10.4px;background:#303030;"></div><div class="a" style="left:656.0px;top:943.1999999999999px;width:1.6px;height:11.2px;background:#f0a020;"></div><div class="a" style="left:562.6px;top:959.2px;width:6.8px;height:6.8px;border:1px solid #9a9a9a;border-radius:50%"></div><div class="a" style="left:564.8px;top:961.4px;width:2.4px;height:2.4px;background:#8a8a8a;border-radius:50%"></div><span class="a t" style="left:573.6px;top:958.2px;font-size:6.8px;line-height:8.8px;color:#b4b4b4;">Fresnel 类型</span><div class="a" style="left:616.2px;top:957.2px;width:226.79999999999995px;height:10.8px;background:#787878;border-radius:1.5px"></div><span class="a t" style="left:619.6px;top:958.4px;font-size:6.8px;line-height:8.8px;color:#d8d8d8;">IOR</span><svg style="left:835.6px;top:961.2px" width="5" height="3" viewBox="0 0 5 3"><path d="M0 0 H5 L2.5 3 Z" fill="#e8e8e8"/></svg><div class="a" style="left:562.6px;top:973.4px;width:6.8px;height:6.8px;border:1px solid #9a9a9a;border-radius:50%"></div><div class="a" style="left:564.8px;top:975.5999999999999px;width:2.4px;height:2.4px;background:#8a8a8a;border-radius:50%"></div><span class="a t" style="left:573.6px;top:972.4px;font-size:6.8px;line-height:8.8px;color:#b4b4b4;">IOR</span><div class="a" style="left:588px;top:979.1999999999999px;width:25px;height:1px;background:repeating-linear-gradient(90deg,#777 0 1px,transparent 1px 3px)"></div><div class="a" style="left:615.6px;top:971.1999999999999px;width:40.6px;height:11.2px;background:#303030;"></div><span class="a t" style="left:619.0px;top:972.6px;font-size:6.8px;line-height:8.8px;color:#a8a8a8;">1.5</span><span class="a t" style="left:651.2px;top:973.2px;font-size:5.6px;line-height:7.6px;color:#9a9a9a;">↕</span><div class="a" style="left:656.2px;top:971.5999999999999px;width:186.79999999999995px;height:10.4px;background:#303030;"></div><div class="a" style="left:656.2px;top:971.5999999999999px;width:94.79999999999995px;height:10.4px;background:#8c8c8c;"></div><div class="a" style="left:750.8px;top:971.1999999999999px;width:1.6px;height:11.2px;background:#f0a020;"></div><div class="a" style="left:557px;top:989px;width:292px;height:7.8px;background:#6c6c6c;"></div><span class="a t" style="left:560.5px;top:989.6px;font-size:6.8px;line-height:8.8px;color:#c8c8c8;height:7px;overflow:hidden">▾ 折射/传输</span><div class="a" style="left:861.2px;top:625.2px;width:6.6px;height:371.6px;background:#333;"></div><div class="a" style="left:861.6px;top:634px;width:5.8px;height:216.6px;background:#8a8a8a;border-radius:1px"></div><svg style="left:862px;top:628px" width="5" height="4.4" viewBox="0 0 5 4.4"><path d="M2.5 0 L5 4.4 H0 Z" fill="#c4c4c4"/></svg><svg style="left:862px;top:990.4px" width="5" height="4.4" viewBox="0 0 5 4.4"><path d="M0 0 H5 L2.5 4.4 Z" fill="#0a0a0a"/></svg><div class="a" style="left:850px;top:698.2px;width:11px;height:298.6px;background:#505050;"></div>
</div></div>
<div id="pctrl"><div class="a" style="left:0px;top:-3px;width:1193px;height:3px;background:#595959;"></div><div class="a" style="left:0px;top:-3.4px;width:555px;height:3.4px;background:#1a95ff;"></div><div class="a" style="left:546.5px;top:-10.5px;width:17px;height:17px;border-radius:50%;background:rgba(20,110,200,.55)"></div><div class="a" style="left:549.8px;top:-7.2px;width:10.4px;height:10.4px;border-radius:50%;background:#2f9dff"></div><span class="a t" style="left:19.5px;top:16px;font-size:11.65px;line-height:20px;color:#ededed;transform:scaleX(.99);transform-origin:0 0">00:16:35 / 00:35:36</span><div class="a" style="left:505px;top:20.3px;width:10px;height:10px;background:#1e98ff;border-radius:1px"></div><svg style="left:539.5px;top:19.8px" width="13" height="11" viewBox="0 0 13 11"><rect x="0" y="0.3" width="2.2" height="10.4" rx="0.6" fill="#1e98ff"/><path d="M12.4 0.6 V10.4 L4 5.5 Z" fill="#1e98ff" stroke="#1e98ff" stroke-width="0.8" stroke-linejoin="round"/></svg><svg style="left:576px;top:6px" width="38" height="38" viewBox="0 0 38 38"><circle cx="18.8" cy="18.8" r="16.9" fill="none" stroke="#1e98ff" stroke-width="2"/><path d="M15.3 13.2 V24.6 L25.2 18.9 Z" fill="#1e98ff" stroke="#1e98ff" stroke-width="1" stroke-linejoin="round"/></svg><svg style="left:637.5px;top:19.8px" width="13" height="11" viewBox="0 0 13 11"><rect x="10.6" y="0.3" width="2.2" height="10.4" rx="0.6" fill="#1e98ff"/><path d="M0.6 0.6 V10.4 L9 5.5 Z" fill="#1e98ff" stroke="#1e98ff" stroke-width="0.8" stroke-linejoin="round"/></svg><svg style="left:675px;top:19px" width="15" height="12" viewBox="0 0 15 12"><path d="M0.5 3.6 H3.6 L8 0.5 V11.5 L3.6 8.4 H0.5 Z" fill="#1e98ff" stroke="#1e98ff" stroke-width="0.8" stroke-linejoin="round"/><path d="M10.6 3 A3.6 3.6 0 0 1 10.6 9" fill="none" stroke="#1e98ff" stroke-width="2" stroke-linecap="round"/></svg><svg style="left:1086.6px;top:17.8px" width="15" height="15" viewBox="0 0 15 15" fill="none" stroke="#d8d8d8" stroke-width="1.2"><path d="M7 14.2 H0.8 V0.8 H14.2 V6.4"/><path d="M9.2 4.2 A2.9 2.9 0 1 0 8 8.6 L12.6 13.6 L14 12.2 L9.4 7.4 A2.9 2.9 0 0 0 9.2 4.2 L7.4 6 L6 5.8 L5.8 4.4 Z" stroke-linejoin="round"/></svg><svg style="left:1122.6px;top:18px" width="16" height="16" viewBox="0 0 16 16" fill="none" stroke="#d8d8d8" stroke-width="1.15"><circle cx="2.6" cy="2.6" r="1.9"/><path d="M4.6 2.6 H14.6"/><circle cx="12" cy="7.7" r="1.9"/><path d="M0.6 7.7 H10"/><circle cx="2.6" cy="12.8" r="1.9"/><path d="M4.6 12.8 H14.6"/></svg><svg style="left:1158.8px;top:17.8px" width="15" height="15" viewBox="0 0 15 15" fill="none" stroke="#d8d8d8" stroke-width="1.2"><path d="M0.7 4.6 V0.7 H4.6 M10.4 0.7 H14.3 V4.6 M14.3 10.4 V14.3 H10.4 M4.6 14.3 H0.7 V10.4"/><path d="M1 1 L5.8 5.8 M14 1 L9.2 5.8 M14 14 L9.2 9.2 M1 14 L5.8 9.2"/></svg></div>
</div>
</body>
</html>
